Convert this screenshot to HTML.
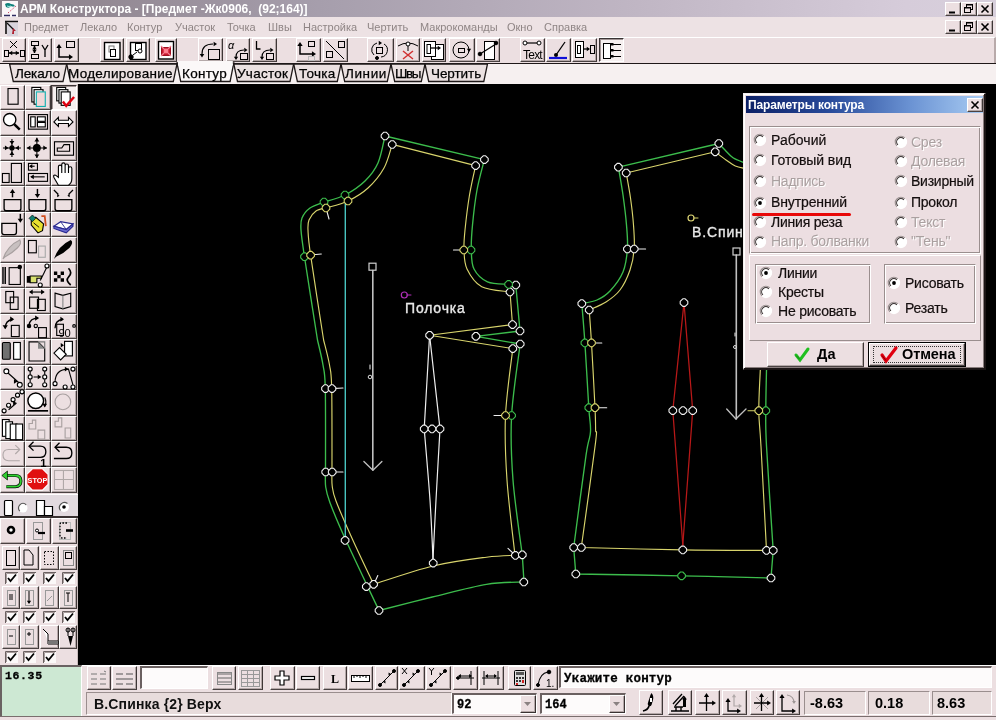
<!DOCTYPE html>
<html><head><meta charset="utf-8"><style>
*{margin:0;padding:0;box-sizing:border-box}
html,body{width:996px;height:720px;overflow:hidden;background:#ecdfe1;font-family:"Liberation Sans",sans-serif;font-size:11px;color:#000}
.a{position:absolute}
.t{white-space:nowrap;line-height:1;will-change:transform}
.b{background:#ecdfe1;border-style:solid;border-width:1px;border-color:#fff #3e3636 #4a4242 #fff;box-shadow:inset -1px -1px #b4a8a8}
.bp{background:#f6f0f0;border-style:solid;border-width:1px;border-color:#3a3434 #fff #fff #3a3434;box-shadow:inset 1px 1px #a09494}
.b svg,.bp svg{position:absolute;left:0;top:0}
svg{overflow:visible;will-change:transform}
</style></head><body>
<div class="a" style="left:0px;top:0px;width:996px;height:17px;background:linear-gradient(90deg,#8a7f88 0%,#a69eac 32%,#c0b6c4 64%,#d6ccda 91%,#d8d0dc 100%)"></div><svg class="a" style="left:2px;top:1px;" width="16" height="16" viewBox="0 0 16 16"><rect x="0" y="0" width="16" height="16" fill="#fbf6f8"/><path d="M3 3 q3-2 6 0 q3 0 4 2 q-2 1-4 0 q-2 3-5 1 z" fill="#10807a"/><path d="M5 5 q2 1 4 0" stroke="#a0f0e8" stroke-width="1" fill="none"/><path d="M6 12 l8-7" stroke="#c84060" stroke-width="1" stroke-dasharray="1.5 1.5" fill="none"/><path d="M2 14.5h6M10 14.5h4" stroke="#302a60" stroke-width="1.5"/></svg><div class="a t" style="left:20px;top:3px;font-weight:bold;font-size:12px;color:#fff">АРМ Конструктора - [Предмет -Жк0906,&nbsp; (92;164)]</div><div class="a b" style="left:945px;top:2px;width:16px;height:14px"></div><div class="a b" style="left:961px;top:2px;width:16px;height:14px"></div><div class="a b" style="left:977px;top:2px;width:16px;height:14px"></div><svg class="a" style="left:945px;top:2px;" width="16" height="14" viewBox="0 0 16 14"><path d="M4 10.5h6" stroke="#000" stroke-width="2"/></svg><svg class="a" style="left:961px;top:2px;" width="16" height="14" viewBox="0 0 16 14"><rect x="5.5" y="2.5" width="6" height="5" fill="none" stroke="#000"/><path d="M5 3h7" stroke="#000" stroke-width="1"/><rect x="3.5" y="5.5" width="6" height="5" fill="#ecdfe1" stroke="#000"/><path d="M3 6h7" stroke="#000"/></svg><svg class="a" style="left:977px;top:2px;" width="16" height="14" viewBox="0 0 16 14"><path d="M4.5 3.5l7 7M11.5 3.5l-7 7" stroke="#000" stroke-width="1.6"/></svg><div class="a" style="left:0px;top:17px;width:996px;height:20px;background:#ede2e4"></div><svg class="a" style="left:0px;top:19px;" width="16" height="16" viewBox="0 0 16 16"><path d="M7 4h11v13h-11z" fill="#d8d4dc"/><path d="M5 2.5h13M6 2v13" stroke="#111" stroke-width="1.6" fill="none"/><path d="M7 4l7 7" stroke="#111" stroke-width="1.3"/><path d="M13 9l3 3-2 0 0 3-2 0z" fill="#b02030"/></svg><div class="a t" style="left:24px;top:22px;font-size:11px;color:#8f8585">Предмет</div><div class="a t" style="left:80px;top:22px;font-size:11px;color:#8f8585">Лекало</div><div class="a t" style="left:126.5px;top:22px;font-size:11px;color:#8f8585">Контур</div><div class="a t" style="left:174.5px;top:22px;font-size:11px;color:#8f8585">Участок</div><div class="a t" style="left:227px;top:22px;font-size:11px;color:#8f8585">Точка</div><div class="a t" style="left:267.5px;top:22px;font-size:11px;color:#8f8585">Швы</div><div class="a t" style="left:303px;top:22px;font-size:11px;color:#8f8585">Настройка</div><div class="a t" style="left:367px;top:22px;font-size:11px;color:#8f8585">Чертить</div><div class="a t" style="left:420px;top:22px;font-size:11px;color:#8f8585">Макрокоманды</div><div class="a t" style="left:507px;top:22px;font-size:11px;color:#8f8585">Окно</div><div class="a t" style="left:544px;top:22px;font-size:11px;color:#8f8585">Справка</div><div class="a b" style="left:945px;top:20px;width:16px;height:14px"></div><div class="a b" style="left:961px;top:20px;width:16px;height:14px"></div><div class="a b" style="left:977px;top:20px;width:16px;height:14px"></div><svg class="a" style="left:945px;top:20px;" width="16" height="14" viewBox="0 0 16 14"><path d="M4 10.5h6" stroke="#000" stroke-width="2"/></svg><svg class="a" style="left:961px;top:20px;" width="16" height="14" viewBox="0 0 16 14"><rect x="5.5" y="2.5" width="6" height="5" fill="none" stroke="#000"/><path d="M5 3h7" stroke="#000" stroke-width="1"/><rect x="3.5" y="5.5" width="6" height="5" fill="#ecdfe1" stroke="#000"/><path d="M3 6h7" stroke="#000"/></svg><svg class="a" style="left:977px;top:20px;" width="16" height="14" viewBox="0 0 16 14"><path d="M4.5 3.5l7 7M11.5 3.5l-7 7" stroke="#000" stroke-width="1.6"/></svg><div class="a" style="left:0px;top:37px;width:996px;height:26px;background:#ecdfe1;border-top:1px solid #fff;border-right:2px solid #b8aaaa"></div><div class="a" style="left:0px;top:62.5px;width:996px;height:2px;background:#1e1818"></div><div class="a" style="left:0px;top:64px;width:996px;height:20px;background:#f3eded"></div><div class="a b" style="left:2px;top:38px;width:24px;height:24px"></div><svg class="a" style="left:2px;top:38px;" width="24" height="24" viewBox="0 0 24 24"><path d="M8 3l7 7M15 3l-7 7" stroke="#000" stroke-width="1" fill="none"/><rect x="2.5" y="12.5" width="4" height="6" fill="none" stroke="#000" stroke-width="1"/><rect x="18.5" y="12.5" width="4" height="6" fill="none" stroke="#000" stroke-width="1"/><path d="M7 15h10" stroke="#000" stroke-width="1.5" fill="none"/><polygon points="7,15 10.24,12.84 10.24,17.16" fill="#000"/><polygon points="17,15 13.76,12.84 13.76,17.16" fill="#000"/></svg><div class="a b" style="left:28px;top:38px;width:24px;height:24px"></div><svg class="a" style="left:28px;top:38px;" width="24" height="24" viewBox="0 0 24 24"><rect x="3.5" y="3.5" width="7" height="4" fill="none" stroke="#000" stroke-width="1"/><rect x="3.5" y="16.5" width="7" height="4" fill="none" stroke="#000" stroke-width="1"/><path d="M6.5 8v7" stroke="#000" stroke-width="1.5" fill="none"/><polygon points="6.5,8 4.34,11.24 8.66,11.24" fill="#000"/><polygon points="6.5,15 4.34,11.76 8.66,11.76" fill="#000"/><path d="M14 7l3 5l3-5M17 12v7" stroke="#000" stroke-width="1.3" fill="none"/></svg><div class="a b" style="left:54px;top:38px;width:25px;height:24px"></div><svg class="a" style="left:54px;top:38px;" width="25" height="24" viewBox="0 0 25 24"><rect x="12.5" y="3.5" width="8" height="6" fill="none" stroke="#000" stroke-width="1"/><path d="M5 8v11h12" stroke="#000" stroke-width="1.5" fill="none"/><polygon points="5,6 2.3,10.05 7.7,10.05" fill="#000"/><polygon points="19,19 14.95,16.3 14.95,21.7" fill="#000"/></svg><div class="a b" style="left:100px;top:38px;width:24px;height:24px"></div><svg class="a" style="left:100px;top:38px;" width="24" height="24" viewBox="0 0 24 24"><rect x="4.5" y="4.5" width="15.5" height="17" fill="#fff" stroke="#000" stroke-width="1.4"/><rect x="9.0" y="8.0" width="5" height="6" fill="none" stroke="#777" stroke-width="1"/><rect x="10.5" y="11.5" width="5" height="7" fill="#fff" stroke="#000" stroke-width="1"/></svg><div class="a b" style="left:126px;top:38px;width:24px;height:24px"></div><svg class="a" style="left:126px;top:38px;" width="24" height="24" viewBox="0 0 24 24"><rect x="4.5" y="4.5" width="15.5" height="17" fill="#fff" stroke="#000" stroke-width="1.4"/><rect x="9.5" y="5.5" width="6" height="7" fill="none" stroke="#000" stroke-width="1"/><circle cx="14" cy="13" r="2" fill="#fff" stroke="#000" stroke-width="1"/><circle cx="5" cy="19" r="2.2" fill="#000" stroke="#000" stroke-width="1"/><path d="M7 17l4-3" stroke="#000" stroke-width="1" fill="none"/></svg><div class="a b" style="left:155px;top:38px;width:22px;height:24px"></div><svg class="a" style="left:155px;top:38px;" width="22" height="24" viewBox="0 0 22 24"><rect x="3.5" y="3.5" width="15" height="17.5" fill="#fff" stroke="#000" stroke-width="1.4"/><rect x="6.5" y="9.5" width="9" height="8" fill="#c81830" stroke="#a01020" stroke-width="1"/><path d="M6 8l10 10M16 8l-10 10" stroke="#f08090" stroke-width="1.2" fill="none"/><circle cx="11" cy="13" r="2" fill="#ff8090" stroke="#ff8090" stroke-width="1"/></svg><div class="a b" style="left:198px;top:38px;width:25px;height:24px"></div><svg class="a" style="left:198px;top:38px;" width="25" height="24" viewBox="0 0 25 24"><path d="M4 16 q0-10 11-10" stroke="#000" stroke-width="1.2" fill="none"/><polygon points="19,6 15.597999999999999,3.7319999999999998 15.597999999999999,8.268" fill="#000"/><polygon points="4,19.5 1.7319999999999998,16.098 6.268000000000001,16.098" fill="#000"/><rect x="10.5" y="11.5" width="11" height="10" fill="none" stroke="#000" stroke-width="1"/></svg><div class="a b" style="left:226px;top:38px;width:24px;height:24px"></div><svg class="a" style="left:226px;top:38px;" width="24" height="24" viewBox="0 0 24 24"><text x="2" y="11" font-size="11" font-family="Liberation Sans" font-style="italic">α</text><path d="M10 19 q0-7 8-7" stroke="#000" stroke-width="1.2" fill="none"/><polygon points="21.5,12 18.259999999999998,9.84 18.259999999999998,14.16" fill="#000"/><polygon points="10,22 7.84,18.759999999999998 12.16,18.759999999999998" fill="#000"/><rect x="14.5" y="15.5" width="7" height="6" fill="none" stroke="#000" stroke-width="1"/></svg><div class="a b" style="left:252px;top:38px;width:25px;height:24px"></div><svg class="a" style="left:252px;top:38px;" width="25" height="24" viewBox="0 0 25 24"><path d="M4.5 3v8h4" stroke="#000" stroke-width="1.3" fill="none"/><path d="M10 19 q0-7 8-7" stroke="#000" stroke-width="1.2" fill="none"/><polygon points="21.5,12 18.259999999999998,9.84 18.259999999999998,14.16" fill="#000"/><polygon points="10,22 7.84,18.759999999999998 12.16,18.759999999999998" fill="#000"/><rect x="14.5" y="15.5" width="7" height="6" fill="none" stroke="#000" stroke-width="1"/></svg><div class="a b" style="left:296px;top:38px;width:25px;height:24px"></div><svg class="a" style="left:296px;top:38px;" width="25" height="24" viewBox="0 0 25 24"><rect x="12.5" y="3.5" width="6" height="5" fill="none" stroke="#000" stroke-width="1"/><path d="M4 7v9h14" stroke="#000" stroke-width="1.5" fill="none"/><polygon points="4,4 1.2999999999999998,8.05 6.7,8.05" fill="#000"/><polygon points="20,16 15.95,13.3 15.95,18.7" fill="#000"/><rect x="12.5" y="18.5" width="6" height="4" fill="none" stroke="#bbb" stroke-width="1"/></svg><div class="a b" style="left:323px;top:38px;width:25px;height:24px"></div><svg class="a" style="left:323px;top:38px;" width="25" height="24" viewBox="0 0 25 24"><rect x="15.5" y="3.5" width="6" height="6" fill="none" stroke="#000" stroke-width="1"/><rect x="3.5" y="13.5" width="6" height="6" fill="none" stroke="#000" stroke-width="1"/><path d="M3 3l18 18" stroke="#000" stroke-width="1" fill="none"/></svg><div class="a b" style="left:367px;top:38px;width:27px;height:24px"></div><svg class="a" style="left:367px;top:38px;" width="27" height="24" viewBox="0 0 27 24"><path d="M7 17 a7 7 0 0 1 3-12" stroke="#000" fill="none"/><path d="M17 6 a7 7 0 0 1-3 13" stroke="#000" fill="none"/><polygon points="15,5 11.76,2.84 11.76,7.16" fill="#000"/><circle cx="10" cy="20" r="1.5" fill="#000" stroke="#000" stroke-width="1"/><rect x="9.5" y="9.5" width="6" height="6" fill="none" stroke="#000" stroke-width="1"/></svg><div class="a b" style="left:396px;top:38px;width:24px;height:24px"></div><svg class="a" style="left:396px;top:38px;" width="24" height="24" viewBox="0 0 24 24"><path d="M2 8 q10-6 20 0" stroke="#000" stroke-width="1" fill="none"/><circle cx="12" cy="6" r="2" fill="#fff" stroke="#000" stroke-width="1"/><path d="M12 8v5" stroke="#000" stroke-width="1" fill="none"/><path d="M7 13l10 8M17 13l-10 8" stroke="#d03030" stroke-width="1.5" fill="none"/></svg><div class="a b" style="left:422px;top:38px;width:24px;height:24px"></div><svg class="a" style="left:422px;top:38px;" width="24" height="24" viewBox="0 0 24 24"><rect x="9.5" y="6.5" width="12" height="15" fill="#fff" stroke="#000" stroke-width="1"/><rect x="2.5" y="3.5" width="11" height="15" fill="#fff" stroke="#000" stroke-width="1"/><rect x="5.0" y="6.5" width="3.5" height="9" fill="#fff" stroke="#000" stroke-width="1"/><path d="M9 10h8" stroke="#000" stroke-width="1.3" fill="none"/><polygon points="19,10 15.76,7.84 15.76,12.16" fill="#000"/></svg><div class="a b" style="left:449px;top:38px;width:26px;height:24px"></div><svg class="a" style="left:449px;top:38px;" width="26" height="24" viewBox="0 0 26 24"><circle cx="12" cy="12" r="8" fill="none" stroke="#000" stroke-width="1"/><rect x="9.5" y="10.5" width="6" height="4" fill="none" stroke="#000" stroke-width="1"/><polygon points="20,14 17.84,10.76 22.16,10.76" fill="#000"/></svg><div class="a b" style="left:476px;top:38px;width:24px;height:24px"></div><svg class="a" style="left:476px;top:38px;" width="24" height="24" viewBox="0 0 24 24"><rect x="8.5" y="3.5" width="10" height="18" fill="#fff" stroke="#000" stroke-width="1"/><path d="M4 16l16-10" stroke="#000" stroke-width="1.2" fill="none"/><circle cx="4" cy="16" r="1.8" fill="#000" stroke="#000" stroke-width="1"/><circle cx="20" cy="5" r="1.8" fill="#000" stroke="#000" stroke-width="1"/></svg><div class="a b" style="left:520px;top:38px;width:25px;height:24px"></div><svg class="a" style="left:520px;top:38px;" width="25" height="24" viewBox="0 0 25 24"><path d="M5 5h14" stroke="#000" stroke-width="1.2" fill="none"/><circle cx="5" cy="5" r="2" fill="#fff" stroke="#000" stroke-width="1"/><circle cx="19" cy="5" r="2" fill="#fff" stroke="#000" stroke-width="1"/><text x="12.5" y="21" text-anchor="middle" font-size="12" font-family="Liberation Sans" letter-spacing="-0.8" fill="#000">Text</text></svg><div class="a b" style="left:546px;top:38px;width:25px;height:24px"></div><svg class="a" style="left:546px;top:38px;" width="25" height="24" viewBox="0 0 25 24"><path d="M10 17l9-13" stroke="#000" stroke-width="1.3" fill="none"/><circle cx="10" cy="17" r="2" fill="#000"/><path d="M3 20h18" stroke="#1010d8" stroke-width="2.2" fill="none"/></svg><div class="a b" style="left:572px;top:38px;width:25px;height:24px"></div><svg class="a" style="left:572px;top:38px;" width="25" height="24" viewBox="0 0 25 24"><rect x="3.5" y="3.5" width="8" height="16" fill="#fff" stroke="#000" stroke-width="1"/><rect x="5.5" y="7.5" width="3" height="8" fill="none" stroke="#000" stroke-width="1"/><path d="M12 11h5" stroke="#000" stroke-width="1.3" fill="none"/><polygon points="18,11 14.76,8.84 14.76,13.16" fill="#000"/><rect x="18.5" y="7.5" width="4" height="8" fill="none" stroke="#000" stroke-width="1"/></svg><div class="a bp" style="left:599px;top:38px;width:25px;height:24px"></div><svg class="a" style="left:599px;top:38px;" width="25" height="24" viewBox="0 0 25 24"><rect x="4.5" y="5.5" width="7" height="15" fill="#fff" stroke="#000" stroke-width="1"/><path d="M14 6.5h8M14 12.5h8M14 18.5h8" stroke="#000" stroke-width="1" fill="none"/><rect x="12" y="5" width="2.5" height="2.5"/><rect x="12" y="11" width="2.5" height="2.5"/><rect x="12" y="17" width="2.5" height="2.5"/></svg><div class="a" style="left:0px;top:64px;width:996px;height:20px;background:#f6f0f0"></div><svg class="a" style="left:0px;top:0px;" width="996" height="90" viewBox="0 0 996 90"><polygon points="9.6,64 13.3,81.5 63.0,81.5 66.7,64" fill="#ebe1e1" stroke="#1e1818" stroke-width="1.3"/><polygon points="66.7,64 70.4,81.5 173.3,81.5 177,64" fill="#ebe1e1" stroke="#1e1818" stroke-width="1.3"/><polygon points="233.8,64 237.5,81.5 290.0,81.5 293.7,64" fill="#ebe1e1" stroke="#1e1818" stroke-width="1.3"/><polygon points="293.7,64 297.4,81.5 337.3,81.5 341,64" fill="#ebe1e1" stroke="#1e1818" stroke-width="1.3"/><polygon points="341,64 344.7,81.5 387.3,81.5 391,64" fill="#ebe1e1" stroke="#1e1818" stroke-width="1.3"/><polygon points="391,64 394.7,81.5 421.3,81.5 425,64" fill="#ebe1e1" stroke="#1e1818" stroke-width="1.3"/><polygon points="425,64 428.7,81.5 483.8,81.5 487.5,64" fill="#ebe1e1" stroke="#1e1818" stroke-width="1.3"/><polygon points="177,63 180.7,81.5 230.10000000000002,81.5 233.8,63" fill="#fbf8f8" stroke="#1e1818" stroke-width="1.3"/><rect x="178" y="61" width="54.80000000000001" height="4.5" fill="#fbf8f8"/></svg><div class="a t" style="left:14.5px;top:67px;font-size:13.5px;letter-spacing:-0.123px;color:#000;-webkit-text-stroke:0.25px #000">Лекало</div><div class="a t" style="left:68.3px;top:67px;font-size:13.5px;letter-spacing:0.295px;color:#000;-webkit-text-stroke:0.25px #000">Моделирование</div><div class="a t" style="left:182px;top:67px;font-size:13.5px;letter-spacing:0.286px;color:#000;-webkit-text-stroke:0.25px #000">Контур</div><div class="a t" style="left:236.8px;top:67px;font-size:13.5px;letter-spacing:0.267px;color:#000;-webkit-text-stroke:0.25px #000">Участок</div><div class="a t" style="left:299px;top:67px;font-size:13.5px;letter-spacing:0.306px;color:#000;-webkit-text-stroke:0.25px #000">Точка</div><div class="a t" style="left:345px;top:67px;font-size:13.5px;letter-spacing:0.609px;color:#000;-webkit-text-stroke:0.25px #000">Линии</div><div class="a t" style="left:395px;top:67px;font-size:13.5px;letter-spacing:-1.417px;color:#000;-webkit-text-stroke:0.25px #000">Швы</div><div class="a t" style="left:430.5px;top:67px;font-size:13.5px;letter-spacing:-0.070px;color:#000;-webkit-text-stroke:0.25px #000">Чертить</div><div class="a" style="left:0px;top:84px;width:78px;height:582px;background:#ecdfe1"></div><div class="a" style="left:77px;top:84px;width:1px;height:582px;background:#c8bcbc"></div><div class="a b" style="left:0px;top:85px;width:25px;height:25px"></div><svg class="a" style="left:0px;top:85px;" width="25" height="25" viewBox="0 0 25 25"><g transform="translate(12.5,12.5) scale(1.12) translate(-12.5,-12.5)"><rect x="8.5" y="4.5" width="9" height="14" fill="none" stroke="#000" stroke-width="1"/></g></svg><div class="a b" style="left:25px;top:85px;width:26px;height:25px"></div><svg class="a" style="left:25px;top:85px;" width="26" height="25" viewBox="0 0 26 25"><g transform="translate(13.0,12.5) scale(1.12) translate(-13.0,-12.5)"><g stroke-width="1"><rect x="7.5" y="3.5" width="8" height="13" fill="#fff" stroke="#000" stroke-width="1"/><rect x="9.5" y="5.5" width="8" height="13" fill="#fff" stroke="#000" stroke-width="1"/><rect x="11.5" y="7.5" width="8" height="13" fill="#f0d8d8" stroke="#10b0b0" stroke-width="1"/></g></g></svg><div class="a bp" style="left:51px;top:85px;width:26px;height:25px"></div><svg class="a" style="left:51px;top:85px;" width="26" height="25" viewBox="0 0 26 25"><g transform="translate(13.0,12.5) scale(1.12) translate(-13.0,-12.5)"><rect x="6.5" y="3.5" width="8" height="12" fill="#fff" stroke="#000" stroke-width="1"/><rect x="8.5" y="5.5" width="8" height="12" fill="#fff" stroke="#000" stroke-width="1"/><rect x="10.5" y="7.5" width="8" height="12" fill="#fff" stroke="#000" stroke-width="1"/><path d="M12 16l3 4l7-8" stroke="#e00010" stroke-width="2.2" fill="none"/></g></svg><div class="a b" style="left:0px;top:110px;width:25px;height:26px"></div><svg class="a" style="left:0px;top:110px;" width="25" height="26" viewBox="0 0 25 26"><g transform="translate(12.5,13.0) scale(1.12) translate(-12.5,-13.0)"><circle cx="10" cy="10" r="5.5" fill="#fff" stroke="#000" stroke-width="1.2"/><path d="M14 14l5 5" stroke="#000" stroke-width="2.2" fill="none"/></g></svg><div class="a b" style="left:25px;top:110px;width:26px;height:26px"></div><svg class="a" style="left:25px;top:110px;" width="26" height="26" viewBox="0 0 26 26"><g transform="translate(13.0,13.0) scale(1.12) translate(-13.0,-13.0)"><rect x="4.5" y="5.5" width="17" height="13" fill="none" stroke="#000" stroke-width="1"/><rect x="6.5" y="7.5" width="4" height="9" fill="#fff" stroke="#000" stroke-width="1"/><rect x="12.5" y="7.5" width="7" height="4" fill="#fff" stroke="#000" stroke-width="1"/><rect x="12.5" y="12.5" width="7" height="4" fill="#fff" stroke="#000" stroke-width="1"/></g></svg><div class="a b" style="left:51px;top:110px;width:26px;height:26px"></div><svg class="a" style="left:51px;top:110px;" width="26" height="26" viewBox="0 0 26 26"><g transform="translate(13.0,13.0) scale(1.12) translate(-13.0,-13.0)"><polygon points="4,12 8,8 8,10.5 17,10.5 17,8 21,12 17,16 17,13.5 8,13.5 8,16" fill="#fff" stroke="#000" stroke-width="1"/></g></svg><div class="a b" style="left:0px;top:136px;width:25px;height:25px"></div><svg class="a" style="left:0px;top:136px;" width="25" height="25" viewBox="0 0 25 25"><g transform="translate(12.5,12.5) scale(1.12) translate(-12.5,-12.5)"><path d="M12 4v16M4 12h16" stroke="#000" stroke-width="1" fill="none"/><circle cx="12" cy="12" r="1.8" fill="#000" stroke="#000" stroke-width="1"/><polygon points="12,9 9.84,5.76 14.16,5.76" fill="#000"/><polygon points="12,15 9.84,18.240000000000002 14.16,18.240000000000002" fill="#000"/><polygon points="9,12 5.76,9.84 5.76,14.16" fill="#000"/><polygon points="15,12 18.240000000000002,9.84 18.240000000000002,14.16" fill="#000"/></g></svg><div class="a b" style="left:25px;top:136px;width:26px;height:25px"></div><svg class="a" style="left:25px;top:136px;" width="26" height="25" viewBox="0 0 26 25"><g transform="translate(13.0,12.5) scale(1.12) translate(-13.0,-12.5)"><path d="M12 3v18M3 12h18" stroke="#000" stroke-width="1" fill="none"/><circle cx="12" cy="12" r="3" fill="#000" stroke="#000" stroke-width="1"/><polygon points="12,3 9.84,6.24 14.16,6.24" fill="#000"/><polygon points="12,21 9.84,17.759999999999998 14.16,17.759999999999998" fill="#000"/><polygon points="3,12 6.24,9.84 6.24,14.16" fill="#000"/><polygon points="21,12 17.759999999999998,9.84 17.759999999999998,14.16" fill="#000"/></g></svg><div class="a b" style="left:51px;top:136px;width:26px;height:25px"></div><svg class="a" style="left:51px;top:136px;" width="26" height="25" viewBox="0 0 26 25"><g transform="translate(13.0,12.5) scale(1.12) translate(-13.0,-12.5)"><rect x="4.5" y="6.5" width="17" height="12" fill="none" stroke="#000" stroke-width="1"/><path d="M7 15v-3h4l2-3h5v6z" stroke="#000" stroke-width="1" fill="none"/></g></svg><div class="a b" style="left:0px;top:161px;width:25px;height:25px"></div><svg class="a" style="left:0px;top:161px;" width="25" height="25" viewBox="0 0 25 25"><g transform="translate(12.5,12.5) scale(1.12) translate(-12.5,-12.5)"><rect x="3.5" y="12.5" width="6" height="8" fill="none" stroke="#000" stroke-width="1"/><rect x="11.5" y="3.5" width="9" height="17" fill="none" stroke="#000" stroke-width="1"/></g></svg><div class="a b" style="left:25px;top:161px;width:26px;height:25px"></div><svg class="a" style="left:25px;top:161px;" width="26" height="25" viewBox="0 0 26 25"><g transform="translate(13.0,12.5) scale(1.12) translate(-13.0,-12.5)"><rect x="4.5" y="3.5" width="8" height="6" fill="none" stroke="#000" stroke-width="1"/><path d="M10 6h-4" stroke="#000" stroke-width="1" fill="none"/><polygon points="5,6 7.916,4.056 7.916,7.944" fill="#000"/><rect x="4.5" y="12.5" width="17" height="7" fill="none" stroke="#000" stroke-width="1"/><path d="M19 15.5h-12" stroke="#000" stroke-width="1" fill="none"/><polygon points="6,15.5 9.24,13.34 9.24,17.66" fill="#000"/></g></svg><div class="a b" style="left:51px;top:161px;width:26px;height:25px"></div><svg class="a" style="left:51px;top:161px;" width="26" height="25" viewBox="0 0 26 25"><g transform="translate(13.0,12.5) scale(1.12) translate(-13.0,-12.5)"><path d="M8 23 L4 16 Q3 13.5 5.5 14 L8 16 V6.5 Q8 5 9.5 5 Q11 5 11 6.5 V12 V4.5 Q11 3 12.5 3 Q14 3 14 4.5 V12 V5.5 Q14 4 15.5 4 Q17 4 17 5.5 V12 V8 Q17 6.5 18.5 6.5 Q20 6.5 20 8 V17 Q20 21 17 23 Z" fill="#fff" stroke="#000" stroke-width="1"/></g></svg><div class="a b" style="left:0px;top:186px;width:25px;height:26px"></div><svg class="a" style="left:0px;top:186px;" width="25" height="26" viewBox="0 0 25 26"><g transform="translate(12.5,13.0) scale(1.12) translate(-12.5,-13.0)"><path d="M5 13.5h15v8q0 2-2 2h-11q-2 0-2-2z" stroke="#000" stroke-width="1.2" fill="none"/><path d="M12.5 11.5v-5" stroke="#000" stroke-width="1.3" fill="none"/><polygon points="12.5,4 10.123999999999999,7.564 14.876000000000001,7.564" fill="#000"/></g></svg><div class="a b" style="left:25px;top:186px;width:26px;height:26px"></div><svg class="a" style="left:25px;top:186px;" width="26" height="26" viewBox="0 0 26 26"><g transform="translate(13.0,13.0) scale(1.12) translate(-13.0,-13.0)"><path d="M5 13.5h15v8q0 2-2 2h-11q-2 0-2-2z" stroke="#000" stroke-width="1.2" fill="none"/><path d="M12.5 4v5" stroke="#000" stroke-width="1.3" fill="none"/><polygon points="12.5,12 10.123999999999999,8.436 14.876000000000001,8.436" fill="#000"/></g></svg><div class="a b" style="left:51px;top:186px;width:26px;height:26px"></div><svg class="a" style="left:51px;top:186px;" width="26" height="26" viewBox="0 0 26 26"><g transform="translate(13.0,13.0) scale(1.12) translate(-13.0,-13.0)"><path d="M5 13.5h15v8q0 2-2 2h-11q-2 0-2-2z" stroke="#000" stroke-width="1.2" fill="none"/><path d="M4 5l4 4M21 5l-4 4" stroke="#000" stroke-width="1.1" fill="none"/><polygon points="9,10 6.894,8.596 6.894,11.404" fill="#000"/><polygon points="16,10 18.106,8.596 18.106,11.404" fill="#000"/></g></svg><div class="a b" style="left:0px;top:212px;width:25px;height:25px"></div><svg class="a" style="left:0px;top:212px;" width="25" height="25" viewBox="0 0 25 25"><g transform="translate(12.5,12.5) scale(1.12) translate(-12.5,-12.5)"><path d="M3 11.5h13v8q0 2-2 2h-9q-2 0-2-2z" stroke="#000" stroke-width="1.2" fill="none"/><path d="M19.5 3v6" stroke="#000" stroke-width="1.3" fill="none"/><polygon points="19.5,11 17.124,7.436 21.876,7.436" fill="#000"/></g></svg><div class="a b" style="left:25px;top:212px;width:26px;height:25px"></div><svg class="a" style="left:25px;top:212px;" width="26" height="25" viewBox="0 0 26 25"><g transform="translate(13.0,12.5) scale(1.12) translate(-13.0,-12.5)"><path d="M7 9l4-3 7 6-1 6-4 2-6-7z" fill="#e8e030" stroke="#000" stroke-width="1"/><path d="M5 7l3-3 3 3-3 3z" fill="#108070" stroke="#000" stroke-width="0.6"/><path d="M16 5l3 0 1 9" stroke="#d05020" stroke-width="1.6" fill="none"/><path d="M9 11l5 4" stroke="#000" stroke-width="0.8"/></g></svg><div class="a b" style="left:51px;top:212px;width:26px;height:25px"></div><svg class="a" style="left:51px;top:212px;" width="26" height="25" viewBox="0 0 26 25"><g transform="translate(13.0,12.5) scale(1.12) translate(-13.0,-12.5)"><path d="M4 14l6-4 11 2-6 5z" fill="#fff" stroke="#2a2a90" stroke-width="1"/><path d="M4 14v2l11 4 6-6v-2l-6 5z" fill="#6a6ad0" stroke="#2a2a90" stroke-width="1"/><path d="M10 10l5 7" stroke="#2a2a90" stroke-width="0.8"/></g></svg><div class="a b" style="left:0px;top:237px;width:25px;height:26px"></div><svg class="a" style="left:0px;top:237px;" width="25" height="26" viewBox="0 0 25 26"><g transform="translate(12.5,13.0) scale(1.12) translate(-12.5,-13.0)"><path d="M4 21 q4-12 15-17 q2 3-2 7 q-5 5-11 8z" fill="#c8c0c0" stroke="#a8a0a0"/></g></svg><div class="a b" style="left:25px;top:237px;width:26px;height:26px"></div><svg class="a" style="left:25px;top:237px;" width="26" height="26" viewBox="0 0 26 26"><g transform="translate(13.0,13.0) scale(1.12) translate(-13.0,-13.0)"><rect x="4.5" y="4.5" width="7" height="11" fill="none" stroke="#000" stroke-width="1"/><rect x="13.5" y="9.5" width="6" height="10" fill="none" stroke="#aaa" stroke-width="1"/></g></svg><div class="a b" style="left:51px;top:237px;width:26px;height:26px"></div><svg class="a" style="left:51px;top:237px;" width="26" height="26" viewBox="0 0 26 26"><g transform="translate(13.0,13.0) scale(1.12) translate(-13.0,-13.0)"><path d="M4 21 q4-12 15-17 q3 2-1 7 q-5 5-12 8z" fill="#000"/></g></svg><div class="a b" style="left:0px;top:263px;width:25px;height:25px"></div><svg class="a" style="left:0px;top:263px;" width="25" height="25" viewBox="0 0 25 25"><g transform="translate(12.5,12.5) scale(1.12) translate(-12.5,-12.5)"><path d="M4 5v15M6 5v15" stroke="#000" stroke-width="1.3" fill="none"/><rect x="9.5" y="5.5" width="10" height="15" fill="none" stroke="#000" stroke-width="1"/><circle cx="19" cy="5" r="1.5" fill="#000" stroke="#000" stroke-width="1"/></g></svg><div class="a b" style="left:25px;top:263px;width:26px;height:25px"></div><svg class="a" style="left:25px;top:263px;" width="26" height="25" viewBox="0 0 26 25"><g transform="translate(13.0,12.5) scale(1.12) translate(-13.0,-12.5)"><path d="M3 13h3v6h-3z" fill="#000"/><path d="M6 13h10v2h-4v4h-6z" fill="#d8e070" stroke="#000" stroke-width="1"/><path d="M15 17l6-12" stroke="#000" stroke-width="1" fill="none"/><circle cx="21" cy="4" r="1.8" fill="#fff" stroke="#000" stroke-width="1"/><circle cx="15" cy="21" r="1.8" fill="#fff" stroke="#000" stroke-width="1"/></g></svg><div class="a b" style="left:51px;top:263px;width:26px;height:25px"></div><svg class="a" style="left:51px;top:263px;" width="26" height="25" viewBox="0 0 26 25"><g transform="translate(13.0,12.5) scale(1.12) translate(-13.0,-12.5)"><path d="M4 9h3v3h-3zM7 12h3v3h-3zM4 15h3v3h-3zM10 9h3v3h-3zM10 15h3v3h-3z" fill="#000"/><path d="M17 6q4 4 0 8q-3 3 2 7" stroke="#000" stroke-width="1.5" fill="none"/></g></svg><div class="a b" style="left:0px;top:288px;width:25px;height:26px"></div><svg class="a" style="left:0px;top:288px;" width="25" height="26" viewBox="0 0 25 26"><g transform="translate(12.5,13.0) scale(1.12) translate(-12.5,-13.0)"><rect x="6.5" y="4.5" width="7" height="10" fill="none" stroke="#000" stroke-width="1"/><rect x="10.5" y="9.5" width="7" height="11" fill="none" stroke="#000" stroke-width="1"/></g></svg><div class="a b" style="left:25px;top:288px;width:26px;height:26px"></div><svg class="a" style="left:25px;top:288px;" width="26" height="26" viewBox="0 0 26 26"><g transform="translate(13.0,13.0) scale(1.12) translate(-13.0,-13.0)"><path d="M6 5h12" stroke="#000" stroke-width="1" fill="none"/><polygon points="5,5 8.24,2.84 8.24,7.16" fill="#000"/><polygon points="19,5 15.76,2.84 15.76,7.16" fill="#000"/><rect x="5.5" y="9.5" width="8" height="10" fill="none" stroke="#000" stroke-width="1"/><rect x="12.5" y="11.5" width="7" height="10" fill="none" stroke="#000" stroke-width="1"/></g></svg><div class="a b" style="left:51px;top:288px;width:26px;height:26px"></div><svg class="a" style="left:51px;top:288px;" width="26" height="26" viewBox="0 0 26 26"><g transform="translate(13.0,13.0) scale(1.12) translate(-13.0,-13.0)"><path d="M5 6l7 2 7-2v12l-7 2-7-2z" stroke="#000" stroke-width="1" fill="none"/><path d="M12 8v12" stroke="#888" stroke-width="1" fill="none"/></g></svg><div class="a b" style="left:0px;top:314px;width:25px;height:25px"></div><svg class="a" style="left:0px;top:314px;" width="25" height="25" viewBox="0 0 25 25"><g transform="translate(12.5,12.5) scale(1.12) translate(-12.5,-12.5)"><path d="M6 14 q0-7 7-8" stroke="#000" stroke-width="1.2" fill="none"/><polygon points="14,6 10.436,3.623999999999999 10.436,8.376000000000001" fill="#000"/><polygon points="6,15 3.623999999999999,11.436 8.376000000000001,11.436" fill="#000"/><rect x="11.5" y="11.5" width="7" height="10" fill="none" stroke="#000" stroke-width="1"/></g></svg><div class="a b" style="left:25px;top:314px;width:26px;height:25px"></div><svg class="a" style="left:25px;top:314px;" width="26" height="25" viewBox="0 0 26 25"><g transform="translate(13.0,12.5) scale(1.12) translate(-13.0,-12.5)"><path d="M5 11 q1-6 8-6" stroke="#000" stroke-width="1.2" fill="none"/><polygon points="14,5 10.436,2.623999999999999 10.436,7.376000000000001" fill="#000"/><circle cx="5" cy="12" r="1.5" fill="#000" stroke="#000" stroke-width="1"/><circle cx="11" cy="12" r="1.5" fill="none" stroke="#000" stroke-width="1"/><rect x="13.5" y="13.5" width="7" height="9" fill="none" stroke="#000" stroke-width="1"/></g></svg><div class="a b" style="left:51px;top:314px;width:26px;height:25px"></div><svg class="a" style="left:51px;top:314px;" width="26" height="25" viewBox="0 0 26 25"><g transform="translate(13.0,12.5) scale(1.12) translate(-13.0,-12.5)"><path d="M5 14 q0-7 7-8" stroke="#000" stroke-width="1.2" fill="none"/><polygon points="13,6 9.76,3.84 9.76,8.16" fill="#000"/><rect x="6.5" y="10.5" width="6" height="10" fill="none" stroke="#000" stroke-width="1"/><text x="8" y="22" font-size="10" font-family="Liberation Sans">90</text><circle cx="22" cy="12" r="1.2" fill="none" stroke="#000" stroke-width="1"/></g></svg><div class="a b" style="left:0px;top:339px;width:25px;height:26px"></div><svg class="a" style="left:0px;top:339px;" width="25" height="26" viewBox="0 0 25 26"><g transform="translate(12.5,13.0) scale(1.12) translate(-12.5,-13.0)"><rect x="3.5" y="4.5" width="7" height="15" rx="1" fill="#707070" stroke="#000"/><rect x="13.5" y="4.5" width="6" height="15" fill="#fff" stroke="#000" stroke-width="1"/></g></svg><div class="a b" style="left:25px;top:339px;width:26px;height:26px"></div><svg class="a" style="left:25px;top:339px;" width="26" height="26" viewBox="0 0 26 26"><g transform="translate(13.0,13.0) scale(1.12) translate(-13.0,-13.0)"><path d="M5 4h8l6 6v11h-14z" stroke="#000" stroke-width="1" fill="none"/><path d="M13 4v6h6z" fill="#888"/><path d="M13 4h6v6" stroke="#777" stroke-width="1" fill="none"/></g></svg><div class="a b" style="left:51px;top:339px;width:26px;height:26px"></div><svg class="a" style="left:51px;top:339px;" width="26" height="26" viewBox="0 0 26 26"><g transform="translate(13.0,13.0) scale(1.12) translate(-13.0,-13.0)"><rect x="13.5" y="3.5" width="7" height="13" fill="#fff" stroke="#000"/><path d="M4 14l5-5 6 6-5 5z" fill="#fff" stroke="#000"/><polygon points="13,7 10.084,5.056 10.084,8.944" fill="#000"/></g></svg><div class="a b" style="left:0px;top:365px;width:25px;height:25px"></div><svg class="a" style="left:0px;top:365px;" width="25" height="25" viewBox="0 0 25 25"><g transform="translate(12.5,12.5) scale(1.12) translate(-12.5,-12.5)"><path d="M8 8l10 9" stroke="#000" stroke-width="1" fill="none"/><circle cx="7" cy="7" r="2.2" fill="#fff" stroke="#000" stroke-width="1"/><circle cx="19" cy="19" r="2.2" fill="#fff" stroke="#000" stroke-width="1"/><polygon points="17,16 13.76,13.84 13.76,18.16" fill="#000"/></g></svg><div class="a b" style="left:25px;top:365px;width:26px;height:25px"></div><svg class="a" style="left:25px;top:365px;" width="26" height="25" viewBox="0 0 26 25"><g transform="translate(13.0,12.5) scale(1.12) translate(-13.0,-12.5)"><circle cx="6" cy="5" r="1.8" fill="#fff" stroke="#000" stroke-width="1"/><circle cx="6" cy="12" r="1.8" fill="#fff" stroke="#000" stroke-width="1"/><circle cx="6" cy="19" r="1.8" fill="#fff" stroke="#000" stroke-width="1"/><circle cx="19" cy="5" r="1.8" fill="#fff" stroke="#000" stroke-width="1"/><circle cx="19" cy="12" r="1.8" fill="#fff" stroke="#000" stroke-width="1"/><circle cx="19" cy="19" r="1.8" fill="#fff" stroke="#000" stroke-width="1"/><path d="M6 7v3M6 14v3M19 7v3M19 14v3M9 12h6" stroke="#000" stroke-width="1" fill="none"/><polygon points="16,12 12.76,9.84 12.76,14.16" fill="#000"/></g></svg><div class="a b" style="left:51px;top:365px;width:26px;height:25px"></div><svg class="a" style="left:51px;top:365px;" width="26" height="25" viewBox="0 0 26 25"><g transform="translate(13.0,12.5) scale(1.12) translate(-13.0,-12.5)"><path d="M5 17 q0-12 12-12 l4 14" stroke="#000" stroke-width="1" fill="none"/><polygon points="17,5 13.76,2.84 13.76,7.16" fill="#000"/><circle cx="5" cy="18" r="1.8" fill="#fff" stroke="#000" stroke-width="1"/><circle cx="21" cy="5" r="1.8" fill="#fff" stroke="#000" stroke-width="1"/><circle cx="21" cy="21" r="1.8" fill="#fff" stroke="#000" stroke-width="1"/><circle cx="14" cy="21" r="1.8" fill="#fff" stroke="#000" stroke-width="1"/></g></svg><div class="a b" style="left:0px;top:390px;width:25px;height:26px"></div><svg class="a" style="left:0px;top:390px;" width="25" height="26" viewBox="0 0 25 26"><g transform="translate(12.5,13.0) scale(1.12) translate(-12.5,-13.0)"><circle cx="5" cy="20" r="1.8" fill="#fff" stroke="#000" stroke-width="1"/><circle cx="9" cy="15" r="1.8" fill="#fff" stroke="#000" stroke-width="1"/><circle cx="13" cy="10" r="1.8" fill="#fff" stroke="#000" stroke-width="1"/><circle cx="17" cy="6" r="1.8" fill="#fff" stroke="#000" stroke-width="1"/><circle cx="21" cy="3" r="1.8" fill="#fff" stroke="#000" stroke-width="1"/><path d="M9 19l7-6" stroke="#000" stroke-width="1" fill="none"/><polygon points="16,13 13.084,11.056 13.084,14.944" fill="#000"/></g></svg><div class="a b" style="left:25px;top:390px;width:26px;height:26px"></div><svg class="a" style="left:25px;top:390px;" width="26" height="26" viewBox="0 0 26 26"><g transform="translate(13.0,13.0) scale(1.12) translate(-13.0,-13.0)"><circle cx="11" cy="11" r="7" fill="#fff" stroke="#000" stroke-width="1.3"/><path d="M4 20h18" stroke="#000" stroke-width="1.5" fill="none"/><path d="M19 8q2 4 0 8" stroke="#000" stroke-width="1" fill="none"/><polygon points="19,17 16.84,13.76 21.16,13.76" fill="#000"/></g></svg><div class="a b" style="left:51px;top:390px;width:26px;height:26px"></div><svg class="a" style="left:51px;top:390px;" width="26" height="26" viewBox="0 0 26 26"><g transform="translate(13.0,13.0) scale(1.12) translate(-13.0,-13.0)"><circle cx="12" cy="12" r="7" fill="none" stroke="#a8a0a0" stroke-width="1"/></g></svg><div class="a b" style="left:0px;top:416px;width:25px;height:25px"></div><svg class="a" style="left:0px;top:416px;" width="25" height="25" viewBox="0 0 25 25"><g transform="translate(12.5,12.5) scale(1.12) translate(-12.5,-12.5)"><rect x="3.5" y="4.5" width="6" height="15" fill="#fff" stroke="#000" stroke-width="1"/><rect x="6.5" y="6.5" width="6" height="15" fill="#fff" stroke="#000" stroke-width="1"/><rect x="10.5" y="8.5" width="6" height="14" fill="#fff" stroke="#000" stroke-width="1"/><rect x="15.5" y="8.5" width="6" height="14" fill="#fff" stroke="#000" stroke-width="1"/></g></svg><div class="a b" style="left:25px;top:416px;width:26px;height:25px"></div><svg class="a" style="left:25px;top:416px;" width="26" height="25" viewBox="0 0 26 25"><g transform="translate(13.0,12.5) scale(1.12) translate(-13.0,-12.5)"><path d="M5 8h3v-3h3v8h-6zM13 14h6v8h-6z" stroke="#a8a0a0" stroke-width="1" fill="none"/></g></svg><div class="a b" style="left:51px;top:416px;width:26px;height:25px"></div><svg class="a" style="left:51px;top:416px;" width="26" height="25" viewBox="0 0 26 25"><g transform="translate(13.0,12.5) scale(1.12) translate(-13.0,-12.5)"><path d="M5 6h3v-3h3v8h-6zM14 12h5v9h-5z" stroke="#a8a0a0" stroke-width="1" fill="none"/></g></svg><div class="a b" style="left:0px;top:441px;width:25px;height:26px"></div><svg class="a" style="left:0px;top:441px;" width="25" height="26" viewBox="0 0 25 26"><g transform="translate(12.5,13.0) scale(1.12) translate(-12.5,-13.0)"><path d="M19 9h-10q-5 0-5 5t5 5h10" stroke="#b0a8a8" stroke-width="1" fill="none"/><path d="M15 5l4 4-4 4" stroke="#b0a8a8" stroke-width="1" fill="none"/></g></svg><div class="a b" style="left:25px;top:441px;width:26px;height:26px"></div><svg class="a" style="left:25px;top:441px;" width="26" height="26" viewBox="0 0 26 26"><g transform="translate(13.0,13.0) scale(1.12) translate(-13.0,-13.0)"><path d="M5 6h10q5 0 5 5t-5 5h-11" stroke="#000" stroke-width="1.2" fill="none"/><path d="M9 2l-4 4 4 4" stroke="#000" stroke-width="1.2" fill="none"/><text x="15" y="25" font-size="10" font-weight="bold" font-family="Liberation Sans">1</text></g></svg><div class="a b" style="left:51px;top:441px;width:26px;height:26px"></div><svg class="a" style="left:51px;top:441px;" width="26" height="26" viewBox="0 0 26 26"><g transform="translate(13.0,13.0) scale(1.12) translate(-13.0,-13.0)"><path d="M5 7h10q5 0 5 5t-5 5h-11" stroke="#000" stroke-width="1.2" fill="none"/><path d="M9 3l-4 4 4 4" stroke="#000" stroke-width="1.2" fill="none"/></g></svg><div class="a b" style="left:0px;top:467px;width:25px;height:26px"></div><svg class="a" style="left:0px;top:467px;" width="25" height="26" viewBox="0 0 25 26"><g transform="translate(12.5,13.0) scale(1.12) translate(-12.5,-13.0)"><path d="M6 9h9q5 0 5 5t-5 5h-8" stroke="#000" stroke-width="2.8" fill="none"/><path d="M6 9h9q5 0 5 5t-5 5h-8" stroke="#30d030" stroke-width="1.6" fill="none"/><path d="M3 9l5-4v8z" fill="#30d030" stroke="#000" stroke-width="0.6"/></g></svg><div class="a b" style="left:25px;top:467px;width:26px;height:26px"></div><svg class="a" style="left:25px;top:467px;" width="26" height="26" viewBox="0 0 26 26"><g transform="translate(13.0,13.0) scale(1.12) translate(-13.0,-13.0)"><polygon points="8,3 17,3 22,8 22,17 17,22 8,22 3,17 3,8" fill="#e01010" stroke="#fff" stroke-width="1"/><text x="12.5" y="15.5" text-anchor="middle" font-size="6.5" font-weight="bold" fill="#fff" font-family="Liberation Sans">STOP</text></g></svg><div class="a b" style="left:51px;top:467px;width:26px;height:26px"></div><svg class="a" style="left:51px;top:467px;" width="26" height="26" viewBox="0 0 26 26"><g transform="translate(13.0,13.0) scale(1.12) translate(-13.0,-13.0)"><rect x="4.5" y="4.5" width="17" height="17" fill="none" stroke="#b0a8a8" stroke-width="1"/><path d="M12.5 4v17M4 12.5h17" stroke="#b0a8a8" stroke-width="1" fill="none"/></g></svg><div class="a" style="left:0px;top:494px;width:78px;height:24px;background:#e2dadf;border-top:1px solid #fff;border-bottom:2px solid #3a3232"></div><svg class="a" style="left:0px;top:490px;" width="78" height="24" viewBox="0 0 78 24"><rect x="4.5" y="10.5" width="8" height="15" rx="1" fill="#fff" stroke="#000" stroke-width="1.2"/><circle cx="23" cy="18" r="4.5" fill="#fff"/><path d="M19.8 21.2 A4.5 4.5 0 0 1 26.2 14.8" stroke="#555" stroke-width="1.2" fill="none"/><path d="M36.5 10.5h8v15h-8z" fill="#fff" stroke="#000" stroke-width="1.2"/><path d="M44.5 16.5h8v9h-8z" fill="#fff" stroke="#000" stroke-width="1.2"/><circle cx="64" cy="17" r="5" fill="#fff"/><path d="M60.5 20.5 A5 5 0 0 1 67.5 13.5" stroke="#555" stroke-width="1.2" fill="none"/><circle cx="64" cy="17" r="1.8" fill="#000"/></svg><div class="a b" style="left:0px;top:518px;width:25px;height:26px"></div><svg class="a" style="left:0px;top:518px;" width="25" height="26" viewBox="0 0 25 26"><circle cx="11" cy="12" r="3" fill="#fff" stroke="#000" stroke-width="2.6"/></svg><div class="a b" style="left:26px;top:518px;width:25px;height:26px"></div><svg class="a" style="left:26px;top:518px;" width="25" height="26" viewBox="0 0 25 26"><rect x="7.5" y="4.5" width="9" height="17" fill="none" stroke="#999" stroke-width="1"/><circle cx="11" cy="12.5" r="1.5" fill="#fff" stroke="#000" stroke-width="1"/><path d="M12 15h7" stroke="#000" stroke-width="2.2" fill="none"/></svg><div class="a b" style="left:52px;top:518px;width:25px;height:26px"></div><svg class="a" style="left:52px;top:518px;" width="25" height="26" viewBox="0 0 25 26"><rect x="7.5" y="4.5" width="11" height="17" fill="none" stroke="#bbb" stroke-width="1"/><path d="M15 5h-6q-1 0-1 2v11q0 2 2 2h5" stroke="#000" stroke-dasharray="1.6 1.4" stroke-width="1.3" fill="none"/><path d="M14 12.5h7" stroke="#000" stroke-width="2.6" fill="none"/></svg><div class="a b" style="left:2px;top:546px;width:18px;height:24px"></div><svg class="a" style="left:2px;top:546px;" width="18" height="24" viewBox="0 0 18 24"><rect x="4.5" y="4.5" width="9" height="15" fill="none" stroke="#000" stroke-width="1"/></svg><div class="a b" style="left:20px;top:546px;width:19px;height:24px"></div><svg class="a" style="left:20px;top:546px;" width="19" height="24" viewBox="0 0 19 24"><path d="M4 4h5l4 5v10h-9z" stroke="#000" stroke-width="1" fill="none"/></svg><div class="a b" style="left:40px;top:546px;width:19px;height:24px"></div><svg class="a" style="left:40px;top:546px;" width="19" height="24" viewBox="0 0 19 24"><rect x="4.5" y="5.5" width="9" height="13" fill="none" stroke="#000" stroke-dasharray="1.5 1.5"/></svg><div class="a b" style="left:59px;top:546px;width:18px;height:24px"></div><svg class="a" style="left:59px;top:546px;" width="18" height="24" viewBox="0 0 18 24"><rect x="4.5" y="4.5" width="10" height="15" fill="none" stroke="#888" stroke-width="1"/><rect x="6.5" y="6.5" width="6" height="6" fill="none" stroke="#000" stroke-width="1"/></svg><svg class="a" style="left:5px;top:572px;" width="14" height="13" viewBox="0 0 14 13"><rect x="0" y="0" width="13" height="12" fill="#fbf8f8"/><path d="M0.5 12V0.5H13" stroke="#6a6060" stroke-width="1" fill="none"/><path d="M1.5 11V1.5H12" stroke="#a89c9c" stroke-width="1" fill="none"/><path d="M3 6l2.5 3l5.5-6.5" stroke="#000" stroke-width="1.8" fill="none"/></svg><svg class="a" style="left:23px;top:572px;" width="14" height="13" viewBox="0 0 14 13"><rect x="0" y="0" width="13" height="12" fill="#fbf8f8"/><path d="M0.5 12V0.5H13" stroke="#6a6060" stroke-width="1" fill="none"/><path d="M1.5 11V1.5H12" stroke="#a89c9c" stroke-width="1" fill="none"/><path d="M3 6l2.5 3l5.5-6.5" stroke="#000" stroke-width="1.8" fill="none"/></svg><svg class="a" style="left:43px;top:572px;" width="14" height="13" viewBox="0 0 14 13"><rect x="0" y="0" width="13" height="12" fill="#fbf8f8"/><path d="M0.5 12V0.5H13" stroke="#6a6060" stroke-width="1" fill="none"/><path d="M1.5 11V1.5H12" stroke="#a89c9c" stroke-width="1" fill="none"/><path d="M3 6l2.5 3l5.5-6.5" stroke="#000" stroke-width="1.8" fill="none"/></svg><svg class="a" style="left:62px;top:572px;" width="14" height="13" viewBox="0 0 14 13"><rect x="0" y="0" width="13" height="12" fill="#fbf8f8"/><path d="M0.5 12V0.5H13" stroke="#6a6060" stroke-width="1" fill="none"/><path d="M1.5 11V1.5H12" stroke="#a89c9c" stroke-width="1" fill="none"/><path d="M3 6l2.5 3l5.5-6.5" stroke="#000" stroke-width="1.8" fill="none"/></svg><div class="a b" style="left:2px;top:586px;width:18px;height:23px"></div><svg class="a" style="left:2px;top:586px;" width="18" height="23" viewBox="0 0 18 23"><rect x="5.5" y="4.5" width="8" height="15" fill="none" stroke="#999" stroke-width="1"/><path d="M7 9h4M7 11h4M7 13h4" stroke="#000" stroke-width="1" fill="none"/></svg><div class="a b" style="left:20px;top:586px;width:19px;height:23px"></div><svg class="a" style="left:20px;top:586px;" width="19" height="23" viewBox="0 0 19 23"><rect x="5.5" y="4.5" width="8" height="15" fill="none" stroke="#999" stroke-width="1"/><path d="M9 5v12" stroke="#000" stroke-width="1" fill="none"/><polygon points="9,18 6.84,14.76 11.16,14.76" fill="#000"/></svg><div class="a b" style="left:40px;top:586px;width:19px;height:23px"></div><svg class="a" style="left:40px;top:586px;" width="19" height="23" viewBox="0 0 19 23"><rect x="5.5" y="4.5" width="8" height="15" fill="none" stroke="#999" stroke-width="1"/><path d="M7 15l5-5" stroke="#999" stroke-width="1" fill="none"/></svg><div class="a b" style="left:59px;top:586px;width:18px;height:23px"></div><svg class="a" style="left:59px;top:586px;" width="18" height="23" viewBox="0 0 18 23"><rect x="5.5" y="4.5" width="8" height="15" fill="none" stroke="#999" stroke-width="1"/><path d="M7 7h4M9 7v9" stroke="#000" stroke-width="1" fill="none"/></svg><svg class="a" style="left:5px;top:611px;" width="14" height="13" viewBox="0 0 14 13"><rect x="0" y="0" width="13" height="12" fill="#fbf8f8"/><path d="M0.5 12V0.5H13" stroke="#6a6060" stroke-width="1" fill="none"/><path d="M1.5 11V1.5H12" stroke="#a89c9c" stroke-width="1" fill="none"/><path d="M3 6l2.5 3l5.5-6.5" stroke="#000" stroke-width="1.8" fill="none"/></svg><svg class="a" style="left:23px;top:611px;" width="14" height="13" viewBox="0 0 14 13"><rect x="0" y="0" width="13" height="12" fill="#fbf8f8"/><path d="M0.5 12V0.5H13" stroke="#6a6060" stroke-width="1" fill="none"/><path d="M1.5 11V1.5H12" stroke="#a89c9c" stroke-width="1" fill="none"/><path d="M3 6l2.5 3l5.5-6.5" stroke="#000" stroke-width="1.8" fill="none"/></svg><svg class="a" style="left:43px;top:611px;" width="14" height="13" viewBox="0 0 14 13"><rect x="0" y="0" width="13" height="12" fill="#fbf8f8"/><path d="M0.5 12V0.5H13" stroke="#6a6060" stroke-width="1" fill="none"/><path d="M1.5 11V1.5H12" stroke="#a89c9c" stroke-width="1" fill="none"/><path d="M3 6l2.5 3l5.5-6.5" stroke="#000" stroke-width="1.8" fill="none"/></svg><svg class="a" style="left:62px;top:611px;" width="14" height="13" viewBox="0 0 14 13"><rect x="0" y="0" width="13" height="12" fill="#fbf8f8"/><path d="M0.5 12V0.5H13" stroke="#6a6060" stroke-width="1" fill="none"/><path d="M1.5 11V1.5H12" stroke="#a89c9c" stroke-width="1" fill="none"/><path d="M3 6l2.5 3l5.5-6.5" stroke="#000" stroke-width="1.8" fill="none"/></svg><div class="a b" style="left:2px;top:625px;width:18px;height:24px"></div><svg class="a" style="left:2px;top:625px;" width="18" height="24" viewBox="0 0 18 24"><rect x="5.5" y="4.5" width="8" height="15" fill="none" stroke="#999" stroke-width="1"/><path d="M7 11h4" stroke="#000" stroke-width="1" fill="none"/></svg><div class="a b" style="left:20px;top:625px;width:19px;height:24px"></div><svg class="a" style="left:20px;top:625px;" width="19" height="24" viewBox="0 0 19 24"><rect x="5.5" y="4.5" width="8" height="15" fill="none" stroke="#999" stroke-width="1"/><path d="M7 9h4M9 7v4" stroke="#000" stroke-width="1" fill="none"/></svg><div class="a b" style="left:40px;top:625px;width:19px;height:24px"></div><svg class="a" style="left:40px;top:625px;" width="19" height="24" viewBox="0 0 19 24"><path d="M3 4l5 5v10h10v-3h-10" stroke="#000" fill="#fff"/><path d="M8 16l10 0 0 3-10 0z" fill="#777"/></svg><div class="a b" style="left:59px;top:625px;width:18px;height:24px"></div><svg class="a" style="left:59px;top:625px;" width="18" height="24" viewBox="0 0 18 24"><path d="M9 3v8M14 3v8" stroke="#000" stroke-width="1" fill="none"/><circle cx="9" cy="5" r="2" fill="none" stroke="#000" stroke-width="1"/><circle cx="14" cy="5" r="2" fill="none" stroke="#000" stroke-width="1"/><path d="M9 11l2.5 10l2.5-10z" fill="#000"/></svg><svg class="a" style="left:5px;top:651px;" width="14" height="13" viewBox="0 0 14 13"><rect x="0" y="0" width="13" height="12" fill="#fbf8f8"/><path d="M0.5 12V0.5H13" stroke="#6a6060" stroke-width="1" fill="none"/><path d="M1.5 11V1.5H12" stroke="#a89c9c" stroke-width="1" fill="none"/><path d="M3 6l2.5 3l5.5-6.5" stroke="#000" stroke-width="1.8" fill="none"/></svg><svg class="a" style="left:23px;top:651px;" width="14" height="13" viewBox="0 0 14 13"><rect x="0" y="0" width="13" height="12" fill="#fbf8f8"/><path d="M0.5 12V0.5H13" stroke="#6a6060" stroke-width="1" fill="none"/><path d="M1.5 11V1.5H12" stroke="#a89c9c" stroke-width="1" fill="none"/><path d="M3 6l2.5 3l5.5-6.5" stroke="#000" stroke-width="1.8" fill="none"/></svg><svg class="a" style="left:43px;top:651px;" width="14" height="13" viewBox="0 0 14 13"><rect x="0" y="0" width="13" height="12" fill="#fbf8f8"/><path d="M0.5 12V0.5H13" stroke="#6a6060" stroke-width="1" fill="none"/><path d="M1.5 11V1.5H12" stroke="#a89c9c" stroke-width="1" fill="none"/><path d="M3 6l2.5 3l5.5-6.5" stroke="#000" stroke-width="1.8" fill="none"/></svg><div class="a" style="left:78px;top:84px;width:918px;height:581px;background:#000"></div><svg class="a" style="left:0;top:0" width="996" height="720" viewBox="0 0 996 720"><path d="M385,136 L484.4,159.6 C483.17,164.67 478.98,179.10 477,190 C475.02,200.90 473.45,215.00 472.5,225 C471.55,235.00 471.05,242.67 471.3,250 C471.55,257.33 471.30,263.70 474,269 C476.70,274.30 481.73,279.23 487.5,281.8 C493.27,284.37 505.08,283.97 508.6,284.4 L515.8,285 L520,331 L475.9,336.3 L520.2,344 C518.77,355.92 512.80,392.83 511.6,415.5 C510.40,438.17 511.22,456.72 513,480 C514.78,503.28 520.75,542.67 522.3,555.2 L524,582 C517.75,582.38 501.78,581.80 486.5,584.3 C471.22,586.80 450.22,592.63 432.3,597 C414.38,601.37 387.88,608.25 379,610.5 C373.23,598.25 352.58,555.00 344.4,537 C336.22,519.00 333.02,510.83 329.9,502.5 C326.78,494.17 326.43,492.08 325.7,487 C324.97,481.92 325.53,474.50 325.5,472 C325.47,458.10 325.72,406.43 325.3,388.6 C324.88,370.77 324.30,373.10 323,365 C321.70,356.90 318.42,344.17 317.5,340 C315.33,326.17 307.25,275.33 304.5,257 C301.75,238.67 301.42,236.50 301,230 C300.58,223.50 300.50,221.67 302,218 C303.50,214.33 306.33,210.67 310,208 C313.67,205.33 321.67,203.00 324,202 C327.50,200.83 338.17,198.50 345,195 C351.83,191.50 359.50,186.33 365,181 C370.50,175.67 374.67,170.50 378,163 C381.33,155.50 383.83,140.50 385,136" stroke="#3cbc4c" stroke-width="1.35" fill="none" stroke-linejoin="round" stroke-linecap="round"/><path d="M392.2,144.4 L475.6,165.6 C474.58,170.50 471.27,184.27 469.5,195 C467.73,205.73 465.92,220.83 465,230 C464.08,239.17 463.67,243.50 464,250 C464.33,256.50 464.05,262.88 467,269 C469.95,275.12 474.53,282.87 481.7,286.7 C488.87,290.53 505.28,291.12 510,292 L512.5,324.6 L429.6,335.3 L512.8,348.6 C511.58,359.75 506.47,393.60 505.5,415.5 C504.53,437.40 505.42,456.70 507,480 C508.58,503.30 513.67,542.75 515,555.3 C510.25,555.62 500.17,555.42 486.5,557.2 C472.83,558.98 451.82,561.48 433,566 C414.18,570.52 383.50,581.25 373.6,584.3 C370.13,576.92 359.07,553.88 352.8,540 C346.53,526.12 339.43,510.03 336,501 C332.57,491.97 332.87,490.63 332.2,485.8 C331.53,480.97 332.03,474.30 332,472 C331.95,458.10 332.12,406.43 331.7,388.6 C331.28,370.77 330.85,373.10 329.5,365 C328.15,356.90 324.58,344.17 323.6,340 C321.43,325.87 313.20,273.53 310.6,255.2 C308.00,236.87 308.27,235.87 308,230 C307.73,224.13 307.67,223.17 309,220 C310.33,216.83 313.17,213.00 316,211 C318.83,209.00 324.33,208.50 326,208 C329.67,206.83 341.00,204.33 348,201 C355.00,197.67 362.00,193.50 368,188 C374.00,182.50 379.97,175.27 384,168 C388.03,160.73 390.83,148.33 392.2,144.4" stroke="#d8d46c" stroke-width="1.15" fill="none" stroke-linejoin="round" stroke-linecap="round"/><path d="M345.3,195 L345.3,537" stroke="#48c4c0" stroke-width="1.4" fill="none" stroke-linejoin="round" stroke-linecap="round"/><path d="M429.6,335.3 L424.2,428.9 C425.17,440.75 428.53,478.32 430,500 C431.47,521.68 432.50,549.17 433,559" stroke="#eeeeee" stroke-width="1.2" fill="none" stroke-linejoin="round" stroke-linecap="round"/><path d="M429.6,335.3 L440,428.9 C439.33,440.75 437.17,478.32 436,500 C434.83,521.68 433.50,549.17 433,559" stroke="#eeeeee" stroke-width="1.2" fill="none" stroke-linejoin="round" stroke-linecap="round"/><path d="M372.8,270.5 L372.8,470" stroke="#c0c0c0" stroke-width="1.6" fill="none" stroke-linejoin="round" stroke-linecap="round"/><path d="M363.9,461.5 L372.9,470.3 L381.9,461.5" stroke="#c0c0c0" stroke-width="1.3" fill="none" stroke-linejoin="round" stroke-linecap="round"/><rect x="369" y="263.2" width="7" height="7" fill="none" stroke="#d0d0d0" stroke-width="1.2"/><path d="M370,365 L370,369" stroke="#eeeeee" stroke-width="1" fill="none" stroke-linejoin="round" stroke-linecap="round"/><circle cx="370" cy="377" r="1.8" stroke="#ddd" fill="none" stroke-width="1"/><path d="M310.6,255 L321.3,254" stroke="#eeeeee" stroke-width="1.1" fill="none" stroke-linejoin="round" stroke-linecap="round"/><path d="M332,388.6 L343,388" stroke="#eeeeee" stroke-width="1.1" fill="none" stroke-linejoin="round" stroke-linecap="round"/><path d="M332,472 L343,472" stroke="#eeeeee" stroke-width="1.1" fill="none" stroke-linejoin="round" stroke-linecap="round"/><path d="M453.5,250 L463.8,250" stroke="#eeeeee" stroke-width="1.1" fill="none" stroke-linejoin="round" stroke-linecap="round"/><path d="M494,415.5 L505,415.5" stroke="#eeeeee" stroke-width="1.1" fill="none" stroke-linejoin="round" stroke-linecap="round"/><path d="M374,584 L377.8,575.6" stroke="#eeeeee" stroke-width="1.1" fill="none" stroke-linejoin="round" stroke-linecap="round"/><path d="M508,548.4 L515,555" stroke="#eeeeee" stroke-width="1.1" fill="none" stroke-linejoin="round" stroke-linecap="round"/><path d="M326,208 L329,219" stroke="#eeeeee" stroke-width="1.1" fill="none" stroke-linejoin="round" stroke-linecap="round"/><polygon points="383.8,132.2 386.2,132.2 388.8,134.8 388.8,137.2 386.2,139.8 383.8,139.8 381.2,137.2 381.2,134.8" stroke="#f0f0f0" stroke-width="1.1" fill="#000" stroke-linejoin="round"/><polygon points="391.0,140.7 393.4,140.7 396.0,143.3 396.0,145.7 393.4,148.3 391.0,148.3 388.4,145.7 388.4,143.3" stroke="#f0f0f0" stroke-width="1.1" fill="#000" stroke-linejoin="round"/><polygon points="483.2,155.8 485.6,155.8 488.2,158.4 488.2,160.8 485.6,163.4 483.2,163.4 480.6,160.8 480.6,158.4" stroke="#f0f0f0" stroke-width="1.1" fill="#000" stroke-linejoin="round"/><polygon points="474.4,161.8 476.8,161.8 479.4,164.4 479.4,166.8 476.8,169.4 474.4,169.4 471.8,166.8 471.8,164.4" stroke="#f0f0f0" stroke-width="1.1" fill="#000" stroke-linejoin="round"/><polygon points="514.6,281.2 517.0,281.2 519.6,283.8 519.6,286.2 517.0,288.8 514.6,288.8 512.0,286.2 512.0,283.8" stroke="#f0f0f0" stroke-width="1.1" fill="#000" stroke-linejoin="round"/><polygon points="508.8,288.2 511.2,288.2 513.8,290.8 513.8,293.2 511.2,295.8 508.8,295.8 506.2,293.2 506.2,290.8" stroke="#f0f0f0" stroke-width="1.1" fill="#000" stroke-linejoin="round"/><polygon points="511.3,320.8 513.7,320.8 516.3,323.4 516.3,325.8 513.7,328.4 511.3,328.4 508.7,325.8 508.7,323.4" stroke="#f0f0f0" stroke-width="1.1" fill="#000" stroke-linejoin="round"/><polygon points="518.8,327.2 521.2,327.2 523.8,329.8 523.8,332.2 521.2,334.8 518.8,334.8 516.2,332.2 516.2,329.8" stroke="#f0f0f0" stroke-width="1.1" fill="#000" stroke-linejoin="round"/><polygon points="428.4,331.5 430.8,331.5 433.4,334.1 433.4,336.5 430.8,339.1 428.4,339.1 425.8,336.5 425.8,334.1" stroke="#f0f0f0" stroke-width="1.1" fill="#000" stroke-linejoin="round"/><polygon points="474.7,332.5 477.1,332.5 479.7,335.1 479.7,337.5 477.1,340.1 474.7,340.1 472.1,337.5 472.1,335.1" stroke="#f0f0f0" stroke-width="1.1" fill="#000" stroke-linejoin="round"/><polygon points="519.0,340.2 521.4,340.2 524.0,342.8 524.0,345.2 521.4,347.8 519.0,347.8 516.4,345.2 516.4,342.8" stroke="#f0f0f0" stroke-width="1.1" fill="#000" stroke-linejoin="round"/><polygon points="511.6,344.8 514.0,344.8 516.6,347.4 516.6,349.8 514.0,352.4 511.6,352.4 509.0,349.8 509.0,347.4" stroke="#f0f0f0" stroke-width="1.1" fill="#000" stroke-linejoin="round"/><polygon points="324.3,384.8 326.7,384.8 329.3,387.4 329.3,389.8 326.7,392.4 324.3,392.4 321.7,389.8 321.7,387.4" stroke="#f0f0f0" stroke-width="1.1" fill="#000" stroke-linejoin="round"/><polygon points="330.8,384.8 333.2,384.8 335.8,387.4 335.8,389.8 333.2,392.4 330.8,392.4 328.2,389.8 328.2,387.4" stroke="#f0f0f0" stroke-width="1.1" fill="#000" stroke-linejoin="round"/><polygon points="324.5,468.2 326.9,468.2 329.5,470.8 329.5,473.2 326.9,475.8 324.5,475.8 321.9,473.2 321.9,470.8" stroke="#f0f0f0" stroke-width="1.1" fill="#000" stroke-linejoin="round"/><polygon points="331.0,468.2 333.4,468.2 336.0,470.8 336.0,473.2 333.4,475.8 331.0,475.8 328.4,473.2 328.4,470.8" stroke="#f0f0f0" stroke-width="1.1" fill="#000" stroke-linejoin="round"/><polygon points="423.0,425.1 425.4,425.1 428.0,427.7 428.0,430.1 425.4,432.7 423.0,432.7 420.4,430.1 420.4,427.7" stroke="#f0f0f0" stroke-width="1.1" fill="#000" stroke-linejoin="round"/><polygon points="430.8,425.1 433.2,425.1 435.8,427.7 435.8,430.1 433.2,432.7 430.8,432.7 428.2,430.1 428.2,427.7" stroke="#f0f0f0" stroke-width="1.1" fill="#000" stroke-linejoin="round"/><polygon points="438.8,425.1 441.2,425.1 443.8,427.7 443.8,430.1 441.2,432.7 438.8,432.7 436.2,430.1 436.2,427.7" stroke="#f0f0f0" stroke-width="1.1" fill="#000" stroke-linejoin="round"/><polygon points="432.0,559.3 434.4,559.3 437.0,561.9 437.0,564.3 434.4,566.9 432.0,566.9 429.4,564.3 429.4,561.9" stroke="#f0f0f0" stroke-width="1.1" fill="#000" stroke-linejoin="round"/><polygon points="514.2,551.6 516.6,551.6 519.2,554.2 519.2,556.6 516.6,559.2 514.2,559.2 511.6,556.6 511.6,554.2" stroke="#f0f0f0" stroke-width="1.1" fill="#000" stroke-linejoin="round"/><polygon points="521.1,551.0 523.5,551.0 526.1,553.6 526.1,556.0 523.5,558.6 521.1,558.6 518.5,556.0 518.5,553.6" stroke="#f0f0f0" stroke-width="1.1" fill="#000" stroke-linejoin="round"/><polygon points="522.6,578.2 525.0,578.2 527.6,580.8 527.6,583.2 525.0,585.8 522.6,585.8 520.0,583.2 520.0,580.8" stroke="#f0f0f0" stroke-width="1.1" fill="#000" stroke-linejoin="round"/><polygon points="377.8,606.7 380.2,606.7 382.8,609.3 382.8,611.7 380.2,614.3 377.8,614.3 375.2,611.7 375.2,609.3" stroke="#f0f0f0" stroke-width="1.1" fill="#000" stroke-linejoin="round"/><polygon points="372.4,580.5 374.8,580.5 377.4,583.1 377.4,585.5 374.8,588.1 372.4,588.1 369.8,585.5 369.8,583.1" stroke="#f0f0f0" stroke-width="1.1" fill="#000" stroke-linejoin="round"/><polygon points="365.1,582.8 367.5,582.8 370.1,585.4 370.1,587.8 367.5,590.4 365.1,590.4 362.5,587.8 362.5,585.4" stroke="#f0f0f0" stroke-width="1.1" fill="#000" stroke-linejoin="round"/><polygon points="343.9,536.6 346.3,536.6 348.9,539.2 348.9,541.6 346.3,544.2 343.9,544.2 341.3,541.6 341.3,539.2" stroke="#f0f0f0" stroke-width="1.1" fill="#000" stroke-linejoin="round"/><polygon points="343.8,191.2 346.2,191.2 348.8,193.8 348.8,196.2 346.2,198.8 343.8,198.8 341.2,196.2 341.2,193.8" stroke="#3cbc4c" stroke-width="1.1" fill="#000" stroke-linejoin="round"/><polygon points="322.8,198.2 325.2,198.2 327.8,200.8 327.8,203.2 325.2,205.8 322.8,205.8 320.2,203.2 320.2,200.8" stroke="#3cbc4c" stroke-width="1.1" fill="#000" stroke-linejoin="round"/><polygon points="303.3,252.9 305.7,252.9 308.3,255.5 308.3,257.9 305.7,260.5 303.3,260.5 300.7,257.9 300.7,255.5" stroke="#3cbc4c" stroke-width="1.1" fill="#000" stroke-linejoin="round"/><polygon points="469.8,246.2 472.2,246.2 474.8,248.8 474.8,251.2 472.2,253.8 469.8,253.8 467.2,251.2 467.2,248.8" stroke="#3cbc4c" stroke-width="1.1" fill="#000" stroke-linejoin="round"/><polygon points="507.4,280.6 509.8,280.6 512.4,283.2 512.4,285.6 509.8,288.2 507.4,288.2 504.8,285.6 504.8,283.2" stroke="#3cbc4c" stroke-width="1.1" fill="#000" stroke-linejoin="round"/><polygon points="510.4,411.7 512.8,411.7 515.4,414.3 515.4,416.7 512.8,419.3 510.4,419.3 507.8,416.7 507.8,414.3" stroke="#3cbc4c" stroke-width="1.1" fill="#000" stroke-linejoin="round"/><polygon points="346.8,197.2 349.2,197.2 351.8,199.8 351.8,202.2 349.2,204.8 346.8,204.8 344.2,202.2 344.2,199.8" stroke="#d8d46c" stroke-width="1.1" fill="#000" stroke-linejoin="round"/><polygon points="324.8,204.2 327.2,204.2 329.8,206.8 329.8,209.2 327.2,211.8 324.8,211.8 322.2,209.2 322.2,206.8" stroke="#d8d46c" stroke-width="1.1" fill="#000" stroke-linejoin="round"/><polygon points="309.4,251.4 311.8,251.4 314.4,254.0 314.4,256.4 311.8,259.0 309.4,259.0 306.8,256.4 306.8,254.0" stroke="#d8d46c" stroke-width="1.1" fill="#000" stroke-linejoin="round"/><polygon points="462.6,246.2 465.0,246.2 467.6,248.8 467.6,251.2 465.0,253.8 462.6,253.8 460.0,251.2 460.0,248.8" stroke="#d8d46c" stroke-width="1.1" fill="#000" stroke-linejoin="round"/><polygon points="504.3,411.7 506.7,411.7 509.3,414.3 509.3,416.7 506.7,419.3 504.3,419.3 501.7,416.7 501.7,414.3" stroke="#d8d46c" stroke-width="1.1" fill="#000" stroke-linejoin="round"/><circle cx="404.3" cy="295" r="3" stroke="#b030b8" stroke-width="1.2" fill="none"/><path d="M407,295 L411,295" stroke="#b030b8" stroke-width="1" fill="none" stroke-linejoin="round" stroke-linecap="round"/><path d="M745,163 C743.00,162.12 736.33,159.87 733,157.7 C729.67,155.53 727.37,152.37 725,150 C722.63,147.63 719.83,144.58 718.8,143.5 L618.4,167.2 C619.17,171.83 621.65,185.37 623,195 C624.35,204.63 625.77,216.00 626.5,225 C627.23,234.00 627.98,241.17 627.4,249 C626.82,256.83 625.90,265.00 623,272 C620.10,279.00 614.33,286.33 610,291 C605.67,295.67 601.70,297.90 597,300 C592.30,302.10 584.33,303.00 581.8,303.6 C582.32,310.15 583.73,325.55 584.9,342.9 C586.07,360.25 587.87,392.88 588.8,407.7 C589.73,422.52 590.97,423.85 590.5,431.8 C590.03,439.75 588.80,436.12 586,455.4 C583.20,474.68 575.75,532.15 573.7,547.5 L575.8,574 C593.43,574.30 649.07,575.13 681.6,575.8 C714.13,576.47 756.10,577.63 771,578 L773.2,550.4 C772.08,533.00 767.73,469.28 766.5,446 C765.27,422.72 765.80,423.37 765.8,410.7 C765.80,398.03 766.38,376.78 766.5,370" stroke="#3cbc4c" stroke-width="1.35" fill="none" stroke-linejoin="round" stroke-linecap="round"/><path d="M745,168.5 C743.38,168.08 738.47,167.42 735.3,166 C732.13,164.58 729.35,162.37 726,160 C722.65,157.63 717.00,153.17 715.2,151.8 L626.2,173 C626.92,177.17 629.28,189.33 630.5,198 C631.72,206.67 632.88,216.50 633.5,225 C634.12,233.50 634.78,241.50 634.2,249 C633.62,256.50 632.37,263.17 630,270 C627.63,276.83 624.00,284.67 620,290 C616.00,295.33 611.13,298.67 606,302 C600.87,305.33 592.00,308.67 589.2,310 C589.58,315.48 590.53,326.62 591.5,342.9 C592.47,359.18 594.32,393.18 595,407.7 C595.68,422.22 595.53,424.02 595.6,430 C595.67,435.98 597.78,424.02 595.4,443.6 C593.02,463.18 583.65,530.18 581.3,547.5 C598.22,547.90 651.93,549.42 682.8,549.9 C713.67,550.38 752.55,550.32 766.5,550.4 C765.58,533.08 762.28,469.78 761,446.5 C759.72,423.22 758.92,423.45 758.8,410.7 C758.68,397.95 760.05,376.78 760.3,370" stroke="#d8d46c" stroke-width="1.15" fill="none" stroke-linejoin="round" stroke-linecap="round"/><path d="M684,302.6 L672.8,410.6 L682.8,545" stroke="#b81818" stroke-width="1.25" fill="none" stroke-linejoin="round" stroke-linecap="round"/><path d="M684,302.6 L692.7,410.6 L682.8,545" stroke="#b81818" stroke-width="1.25" fill="none" stroke-linejoin="round" stroke-linecap="round"/><path d="M736.3,255 L736.3,419" stroke="#c0c0c0" stroke-width="1.6" fill="none" stroke-linejoin="round" stroke-linecap="round"/><path d="M726.7,409 L735.9,419 L746,409" stroke="#c0c0c0" stroke-width="1.3" fill="none" stroke-linejoin="round" stroke-linecap="round"/><rect x="733" y="248" width="7" height="7" fill="none" stroke="#d0d0d0" stroke-width="1.2"/><path d="M735,333 L735,336" stroke="#eeeeee" stroke-width="1" fill="none" stroke-linejoin="round" stroke-linecap="round"/><circle cx="735" cy="347" r="1.5" stroke="#ddd" fill="none" stroke-width="1"/><path d="M634,249 L645.6,249" stroke="#eeeeee" stroke-width="1.1" fill="none" stroke-linejoin="round" stroke-linecap="round"/><path d="M591.5,343 L601.8,343" stroke="#eeeeee" stroke-width="1.1" fill="none" stroke-linejoin="round" stroke-linecap="round"/><path d="M595,407.7 L606.7,407.7" stroke="#eeeeee" stroke-width="1.1" fill="none" stroke-linejoin="round" stroke-linecap="round"/><path d="M748,410.7 L758.8,410.7" stroke="#d8d46c" stroke-width="1.1" fill="none" stroke-linejoin="round" stroke-linecap="round"/><polygon points="617.2,163.4 619.6,163.4 622.2,166.0 622.2,168.4 619.6,171.0 617.2,171.0 614.6,168.4 614.6,166.0" stroke="#f0f0f0" stroke-width="1.1" fill="#000" stroke-linejoin="round"/><polygon points="717.6,139.7 720.0,139.7 722.6,142.3 722.6,144.7 720.0,147.3 717.6,147.3 715.0,144.7 715.0,142.3" stroke="#f0f0f0" stroke-width="1.1" fill="#000" stroke-linejoin="round"/><polygon points="625.0,169.2 627.4,169.2 630.0,171.8 630.0,174.2 627.4,176.8 625.0,176.8 622.4,174.2 622.4,171.8" stroke="#f0f0f0" stroke-width="1.1" fill="#000" stroke-linejoin="round"/><polygon points="714.0,148.0 716.4,148.0 719.0,150.6 719.0,153.0 716.4,155.6 714.0,155.6 711.4,153.0 711.4,150.6" stroke="#f0f0f0" stroke-width="1.1" fill="#000" stroke-linejoin="round"/><polygon points="580.6,299.8 583.0,299.8 585.6,302.4 585.6,304.8 583.0,307.4 580.6,307.4 578.0,304.8 578.0,302.4" stroke="#f0f0f0" stroke-width="1.1" fill="#000" stroke-linejoin="round"/><polygon points="588.0,306.2 590.4,306.2 593.0,308.8 593.0,311.2 590.4,313.8 588.0,313.8 585.4,311.2 585.4,308.8" stroke="#f0f0f0" stroke-width="1.1" fill="#000" stroke-linejoin="round"/><polygon points="626.2,245.2 628.6,245.2 631.2,247.8 631.2,250.2 628.6,252.8 626.2,252.8 623.6,250.2 623.6,247.8" stroke="#f0f0f0" stroke-width="1.1" fill="#000" stroke-linejoin="round"/><polygon points="633.0,245.2 635.4,245.2 638.0,247.8 638.0,250.2 635.4,252.8 633.0,252.8 630.4,250.2 630.4,247.8" stroke="#f0f0f0" stroke-width="1.1" fill="#000" stroke-linejoin="round"/><polygon points="682.8,298.8 685.2,298.8 687.8,301.4 687.8,303.8 685.2,306.4 682.8,306.4 680.2,303.8 680.2,301.4" stroke="#f0f0f0" stroke-width="1.1" fill="#000" stroke-linejoin="round"/><polygon points="671.6,406.8 674.0,406.8 676.6,409.4 676.6,411.8 674.0,414.4 671.6,414.4 669.0,411.8 669.0,409.4" stroke="#f0f0f0" stroke-width="1.1" fill="#000" stroke-linejoin="round"/><polygon points="681.8,406.8 684.2,406.8 686.8,409.4 686.8,411.8 684.2,414.4 681.8,414.4 679.2,411.8 679.2,409.4" stroke="#f0f0f0" stroke-width="1.1" fill="#000" stroke-linejoin="round"/><polygon points="691.5,406.8 693.9,406.8 696.5,409.4 696.5,411.8 693.9,414.4 691.5,414.4 688.9,411.8 688.9,409.4" stroke="#f0f0f0" stroke-width="1.1" fill="#000" stroke-linejoin="round"/><polygon points="572.5,543.7 574.9,543.7 577.5,546.3 577.5,548.7 574.9,551.3 572.5,551.3 569.9,548.7 569.9,546.3" stroke="#f0f0f0" stroke-width="1.1" fill="#000" stroke-linejoin="round"/><polygon points="580.1,543.7 582.5,543.7 585.1,546.3 585.1,548.7 582.5,551.3 580.1,551.3 577.5,548.7 577.5,546.3" stroke="#f0f0f0" stroke-width="1.1" fill="#000" stroke-linejoin="round"/><polygon points="574.6,570.2 577.0,570.2 579.6,572.8 579.6,575.2 577.0,577.8 574.6,577.8 572.0,575.2 572.0,572.8" stroke="#f0f0f0" stroke-width="1.1" fill="#000" stroke-linejoin="round"/><polygon points="681.6,546.1 684.0,546.1 686.6,548.7 686.6,551.1 684.0,553.7 681.6,553.7 679.0,551.1 679.0,548.7" stroke="#f0f0f0" stroke-width="1.1" fill="#000" stroke-linejoin="round"/><polygon points="765.3,546.6 767.7,546.6 770.3,549.2 770.3,551.6 767.7,554.2 765.3,554.2 762.7,551.6 762.7,549.2" stroke="#f0f0f0" stroke-width="1.1" fill="#000" stroke-linejoin="round"/><polygon points="772.0,546.6 774.4,546.6 777.0,549.2 777.0,551.6 774.4,554.2 772.0,554.2 769.4,551.6 769.4,549.2" stroke="#f0f0f0" stroke-width="1.1" fill="#000" stroke-linejoin="round"/><polygon points="769.8,574.2 772.2,574.2 774.8,576.8 774.8,579.2 772.2,581.8 769.8,581.8 767.2,579.2 767.2,576.8" stroke="#f0f0f0" stroke-width="1.1" fill="#000" stroke-linejoin="round"/><polygon points="583.7,339.1 586.1,339.1 588.7,341.7 588.7,344.1 586.1,346.7 583.7,346.7 581.1,344.1 581.1,341.7" stroke="#3cbc4c" stroke-width="1.1" fill="#000" stroke-linejoin="round"/><polygon points="587.6,403.9 590.0,403.9 592.6,406.5 592.6,408.9 590.0,411.5 587.6,411.5 585.0,408.9 585.0,406.5" stroke="#3cbc4c" stroke-width="1.1" fill="#000" stroke-linejoin="round"/><polygon points="680.4,572.0 682.8,572.0 685.4,574.6 685.4,577.0 682.8,579.6 680.4,579.6 677.8,577.0 677.8,574.6" stroke="#3cbc4c" stroke-width="1.1" fill="#000" stroke-linejoin="round"/><polygon points="764.6,406.9 767.0,406.9 769.6,409.5 769.6,411.9 767.0,414.5 764.6,414.5 762.0,411.9 762.0,409.5" stroke="#3cbc4c" stroke-width="1.1" fill="#000" stroke-linejoin="round"/><polygon points="590.3,339.1 592.7,339.1 595.3,341.7 595.3,344.1 592.7,346.7 590.3,346.7 587.7,344.1 587.7,341.7" stroke="#d8d46c" stroke-width="1.1" fill="#000" stroke-linejoin="round"/><polygon points="593.8,403.9 596.2,403.9 598.8,406.5 598.8,408.9 596.2,411.5 593.8,411.5 591.2,408.9 591.2,406.5" stroke="#d8d46c" stroke-width="1.1" fill="#000" stroke-linejoin="round"/><polygon points="757.6,406.9 760.0,406.9 762.6,409.5 762.6,411.9 760.0,414.5 757.6,414.5 755.0,411.9 755.0,409.5" stroke="#d8d46c" stroke-width="1.1" fill="#000" stroke-linejoin="round"/><circle cx="691" cy="218" r="3" stroke="#dcd474" stroke-width="1.2" fill="none"/><path d="M694,218 L698,218" stroke="#d8d46c" stroke-width="1" fill="none" stroke-linejoin="round" stroke-linecap="round"/></svg><div class="a t" style="left:405.4px;top:301px;font-size:14px;letter-spacing:0.822px;color:#e8e8e8;-webkit-text-stroke:0.35px #e8e8e8">Полочка</div><div class="a t" style="left:692.3px;top:224.5px;font-size:14px;letter-spacing:0.875px;color:#e8e8e8;-webkit-text-stroke:0.35px #e8e8e8">В.Спинка</div><div class="a" style="left:0px;top:665px;width:996px;height:55px;background:#ecdfe1;border-top:1px solid #fff"></div><div class="a" style="left:0px;top:665px;width:82px;height:53px;background:#cde8d3;border-style:solid;border-width:2px 1px 1px 2px;border-color:#6a6262 #fff #fff #6a6262"></div><div class="a t" style="left:4.5px;top:669.8px;font-size:11.5px;letter-spacing:0.634px;font-weight:bold;font-family:'Liberation Mono',monospace;color:#000;-webkit-text-stroke:0.3px #000">16.35</div><div class="a b" style="left:87px;top:666px;width:24px;height:24px"></div><svg class="a" style="left:87px;top:666px;" width="24" height="24" viewBox="0 0 24 24"><path d="M4 8h6M13 8h6M4 13h6M13 13h6M4 18h6M13 18h6" stroke="#777" stroke-width="1" fill="none"/><path d="M17 5l2 1" stroke="#777" stroke-width="1" fill="none"/></svg><div class="a b" style="left:112px;top:666px;width:25px;height:24px"></div><svg class="a" style="left:112px;top:666px;" width="25" height="24" viewBox="0 0 25 24"><path d="M4 8h7M14 8h7M4 13h17M4 18h7M14 18h7" stroke="#555" stroke-width="1.2" fill="none"/></svg><div class="a" style="left:140px;top:666px;width:68px;height:23px;background:#fdfbfb;border-style:solid;border-width:2px 1px 1px 2px;border-color:#6a6060 #fff #fff #6a6060"></div><div class="a b" style="left:212px;top:666px;width:24px;height:24px"></div><svg class="a" style="left:212px;top:666px;" width="24" height="24" viewBox="0 0 24 24"><path d="M5 8h14M5 12h14M5 16h14" stroke="#666" stroke-width="1" fill="none"/><rect x="5.5" y="6.5" width="14" height="12" fill="none" stroke="#888" stroke-width="1"/></svg><div class="a b" style="left:238px;top:666px;width:25px;height:24px"></div><svg class="a" style="left:238px;top:666px;" width="25" height="24" viewBox="0 0 25 24"><rect x="3.5" y="4.5" width="18" height="16" fill="none" stroke="#999" stroke-width="1"/><path d="M3 8.5h18M3 12.5h18M3 16.5h18M9.5 4v16M15.5 4v16" stroke="#999" stroke-width="1" fill="none"/></svg><div class="a b" style="left:270px;top:666px;width:25px;height:24px"></div><svg class="a" style="left:270px;top:666px;" width="25" height="24" viewBox="0 0 25 24"><path d="M10 5h4v5h5v4h-5v5h-4v-5h-5v-4h5z" fill="#fff" stroke="#000" stroke-width="1.2"/></svg><div class="a b" style="left:296px;top:666px;width:24px;height:24px"></div><svg class="a" style="left:296px;top:666px;" width="24" height="24" viewBox="0 0 24 24"><rect x="5.5" y="10.5" width="13" height="3" fill="#fff" stroke="#000" stroke-width="1.2"/></svg><div class="a b" style="left:323px;top:666px;width:24px;height:24px"></div><svg class="a" style="left:323px;top:666px;" width="24" height="24" viewBox="0 0 24 24"><text x="12" y="17" text-anchor="middle" font-size="12" font-weight="bold" font-family="Liberation Serif">L</text></svg><div class="a b" style="left:348px;top:666px;width:25px;height:24px"></div><svg class="a" style="left:348px;top:666px;" width="25" height="24" viewBox="0 0 25 24"><rect x="3.5" y="9.5" width="18" height="6" fill="#fff" stroke="#000" stroke-width="1"/><path d="M6 9v3M9 9v2M12 9v3M15 9v2M18 9v3" stroke="#000" stroke-width="1" fill="none"/></svg><div class="a b" style="left:375px;top:666px;width:23px;height:24px"></div><svg class="a" style="left:375px;top:666px;" width="23" height="24" viewBox="0 0 23 24"><path d="M6 18l12-12" stroke="#000" stroke-width="1" fill="none"/><circle cx="5" cy="19" r="1.5" fill="#000" stroke="#000" stroke-width="1"/><circle cx="19" cy="5" r="1.5" fill="#000" stroke="#000" stroke-width="1"/><polygon points="8,16 10.43,14.379999999999999 10.43,17.62" fill="#000"/><polygon points="16,8 13.57,6.38 13.57,9.620000000000001" fill="#000"/></svg><div class="a b" style="left:399px;top:666px;width:26px;height:24px"></div><svg class="a" style="left:399px;top:666px;" width="26" height="24" viewBox="0 0 26 24"><path d="M6 18l12-12" stroke="#000" stroke-width="1" fill="none"/><circle cx="5" cy="19" r="1.5" fill="#000" stroke="#000" stroke-width="1"/><circle cx="19" cy="5" r="1.5" fill="#000" stroke="#000" stroke-width="1"/><polygon points="8,16 10.43,14.379999999999999 10.43,17.62" fill="#000"/><polygon points="16,8 13.57,6.38 13.57,9.620000000000001" fill="#000"/><path d="M3 2l5 6M8 2l-5 6" stroke="#000" stroke-width="1" fill="none"/></svg><div class="a b" style="left:426px;top:666px;width:25px;height:24px"></div><svg class="a" style="left:426px;top:666px;" width="25" height="24" viewBox="0 0 25 24"><path d="M6 18l12-12" stroke="#000" stroke-width="1" fill="none"/><circle cx="5" cy="19" r="1.5" fill="#000" stroke="#000" stroke-width="1"/><circle cx="19" cy="5" r="1.5" fill="#000" stroke="#000" stroke-width="1"/><polygon points="8,16 10.43,14.379999999999999 10.43,17.62" fill="#000"/><polygon points="16,8 13.57,6.38 13.57,9.620000000000001" fill="#000"/><path d="M3 2l2.5 3l2.5-3M5.5 5v4" stroke="#000" stroke-width="1" fill="none"/></svg><div class="a b" style="left:453px;top:666px;width:25px;height:24px"></div><svg class="a" style="left:453px;top:666px;" width="25" height="24" viewBox="0 0 25 24"><path d="M3 12h18" stroke="#000" stroke-width="1" fill="none"/><path d="M6 10h12" stroke="#000" stroke-width="1" fill="none"/><polygon points="5,10 7.916,8.056 7.916,11.944" fill="#000"/><polygon points="19,10 16.084,8.056 16.084,11.944" fill="#000"/><path d="M18 5v14" stroke="#000" stroke-width="1" fill="none"/><circle cx="5" cy="12" r="1.3" fill="#000" stroke="#000" stroke-width="1"/></svg><div class="a b" style="left:479px;top:666px;width:25px;height:24px"></div><svg class="a" style="left:479px;top:666px;" width="25" height="24" viewBox="0 0 25 24"><path d="M5 5v14M19 5v14M3 12h18" stroke="#000" stroke-width="1" fill="none"/><path d="M7 10h10" stroke="#000" stroke-width="1" fill="none"/><polygon points="6,10 8.916,8.056 8.916,11.944" fill="#000"/><polygon points="18,10 15.084,8.056 15.084,11.944" fill="#000"/></svg><div class="a b" style="left:508px;top:666px;width:23px;height:24px"></div><svg class="a" style="left:508px;top:666px;" width="23" height="24" viewBox="0 0 23 24"><rect x="6.5" y="4.5" width="11" height="15" rx="1" fill="#ddd" stroke="#000"/><rect x="8" y="6" width="8" height="3" fill="#555"/><path d="M8 11h2v2h-2zM11 11h2v2h-2zM14 11h2v2h-2zM8 14h2v2h-2zM11 14h2v2h-2z" fill="#333"/><path d="M14 14h2v3h-2z" fill="#d02020"/><path d="M8 17h2v2h-2z" fill="#d02020"/></svg><div class="a b" style="left:533px;top:666px;width:25px;height:24px"></div><svg class="a" style="left:533px;top:666px;" width="25" height="24" viewBox="0 0 25 24"><path d="M5 19 q2-12 10-13" stroke="#000" stroke-width="1.2" fill="none"/><circle cx="5" cy="19" r="1.5" fill="#000" stroke="#000" stroke-width="1"/><circle cx="16" cy="6" r="1.8" fill="#000" stroke="#000" stroke-width="1"/><text x="13" y="21" font-size="10" font-family="Liberation Sans">1.</text></svg><div class="a" style="left:559px;top:666px;width:433px;height:22px;background:#fdfbfb;border-style:solid;border-width:2px 1px 1px 2px;border-color:#6a6060 #fff #fff #6a6060"></div><div class="a t" style="left:564px;top:672.5px;font-size:12.5px;letter-spacing:0.214px;font-weight:bold;font-family:'Liberation Mono',monospace;color:#000;-webkit-text-stroke:0.3px #000">Укажите контур</div><div class="a" style="left:86px;top:692px;width:366px;height:23px;background:#e8dcdc;border-style:solid;border-width:1px;border-color:#9a8e8e #fff #fff #9a8e8e"></div><div class="a t" style="left:93.7px;top:697px;font-size:14px;letter-spacing:0.147px;font-weight:bold;color:#101010">В.Спинка {2} Верх</div><div class="a" style="left:452px;top:693px;width:85px;height:21px;background:#fdfbfb;border-style:solid;border-width:2px 1px 1px 2px;border-color:#6a6060 #fff #fff #6a6060"></div><div class="a" style="left:520px;top:695px;width:16px;height:18px;background:#ecdfe1;border-style:solid;border-width:1px;border-color:#fff #3a3232 #3a3232 #fff;box-shadow:inset -1px -1px #b4a8a8"></div><svg class="a" style="left:520px;top:695px;" width="16" height="18" viewBox="0 0 16 18"><polygon points="4,7 11,7 7.5,11" fill="#8a8282"/></svg><div class="a t" style="left:457px;top:698.5px;font-size:12px;letter-spacing:0.000px;font-weight:bold;font-family:'Liberation Mono',monospace;color:#000;-webkit-text-stroke:0.3px #000">92</div><div class="a" style="left:540px;top:693px;width:86px;height:21px;background:#fdfbfb;border-style:solid;border-width:2px 1px 1px 2px;border-color:#6a6060 #fff #fff #6a6060"></div><div class="a" style="left:609px;top:695px;width:16px;height:18px;background:#ecdfe1;border-style:solid;border-width:1px;border-color:#fff #3a3232 #3a3232 #fff;box-shadow:inset -1px -1px #b4a8a8"></div><svg class="a" style="left:609px;top:695px;" width="16" height="18" viewBox="0 0 16 18"><polygon points="4,7 11,7 7.5,11" fill="#8a8282"/></svg><div class="a t" style="left:545px;top:698.5px;font-size:12px;letter-spacing:0.000px;font-weight:bold;font-family:'Liberation Mono',monospace;color:#000;-webkit-text-stroke:0.3px #000">164</div><div class="a b" style="left:639px;top:690px;width:24px;height:25px"></div><svg class="a" style="left:639px;top:690px;" width="24" height="25" viewBox="0 0 24 25"><path d="M12.5 3 q2.5 3 1.5 7 l-1.5 5 q-1 2-3 1 q-1.5-2 0-5 l1-3 q0.5-3 2-5z" fill="#000"/><path d="M10 16 q-1 4 -6 5" stroke="#000" stroke-width="1.6" fill="none"/><path d="M11 8 l2 0 0 4-2 0z" fill="#fff"/></svg><div class="a b" style="left:668px;top:690px;width:24px;height:25px"></div><svg class="a" style="left:668px;top:690px;" width="24" height="25" viewBox="0 0 24 25"><path d="M3 21h18M6 17h9M8 17v4M13 17v4" stroke="#000" stroke-width="1.4" fill="none"/><path d="M5 14l9-10M7 16l9-10" stroke="#000" stroke-width="1.3" fill="none"/><path d="M15 9h3v8h-3z" fill="#000"/><polygon points="16.5,6 14.123999999999999,9.564 18.876,9.564" fill="#000"/></svg><div class="a b" style="left:695px;top:690px;width:25px;height:25px"></div><svg class="a" style="left:695px;top:690px;" width="25" height="25" viewBox="0 0 25 25"><path d="M11.5 5v16M4 13h15" stroke="#000" stroke-width="1.3" fill="none"/><polygon points="11.5,3 8.908,6.888 14.092,6.888" fill="#000"/><polygon points="21,13 17.112000000000002,10.408 17.112000000000002,15.592" fill="#000"/></svg><div class="a b" style="left:722px;top:690px;width:25px;height:25px"></div><svg class="a" style="left:722px;top:690px;" width="25" height="25" viewBox="0 0 25 25"><path d="M12 6v10h6" stroke="#b0a8a8" stroke-width="1.2" fill="none"/><polygon points="12,4 9.84,7.24 14.16,7.24" fill="#b0a8a8"/><polygon points="20,16 16.759999999999998,13.84 16.759999999999998,18.16" fill="#b0a8a8"/><path d="M6 10v11h11" stroke="#000" stroke-width="1.3" fill="none"/><polygon points="6,8 3.4079999999999995,11.888 8.592,11.888" fill="#000"/><polygon points="19,21 15.112,18.408 15.112,23.592" fill="#000"/></svg><div class="a b" style="left:750px;top:690px;width:24px;height:25px"></div><svg class="a" style="left:750px;top:690px;" width="24" height="25" viewBox="0 0 24 25"><path d="M6 7l12 12M18 7l-12 12" stroke="#a8a0a0" stroke-width="1" fill="none"/><path d="M11.5 5v16M4 13h15" stroke="#000" stroke-width="1.3" fill="none"/><polygon points="11.5,3 8.908,6.888 14.092,6.888" fill="#000"/><polygon points="21,13 17.112000000000002,10.408 17.112000000000002,15.592" fill="#000"/></svg><div class="a b" style="left:776px;top:690px;width:24px;height:25px"></div><svg class="a" style="left:776px;top:690px;" width="24" height="25" viewBox="0 0 24 25"><path d="M11 5q7 1 7 8" stroke="#a09898" stroke-width="1.2" fill="none"/><polygon points="18,14 16.056,11.084 19.944,11.084" fill="#a09898"/><path d="M6 6v15h11" stroke="#000" stroke-width="1.3" fill="none"/><polygon points="6,4 3.4079999999999995,7.888 8.592,7.888" fill="#000"/><polygon points="20,21 16.112000000000002,18.408 16.112000000000002,23.592" fill="#000"/></svg><div class="a" style="left:804px;top:691px;width:62px;height:24px;background:#e8dcdc;border-style:solid;border-width:1px;border-color:#9a8e8e #fff #fff #9a8e8e"></div><div class="a t" style="left:810px;top:696px;font-size:14.5px;letter-spacing:0.000px;font-weight:bold;color:#000">-8.63</div><div class="a" style="left:868px;top:691px;width:62px;height:24px;background:#e8dcdc;border-style:solid;border-width:1px;border-color:#9a8e8e #fff #fff #9a8e8e"></div><div class="a t" style="left:875px;top:696px;font-size:14.5px;letter-spacing:0.000px;font-weight:bold;color:#000">0.18</div><div class="a" style="left:932px;top:691px;width:60px;height:24px;background:#e8dcdc;border-style:solid;border-width:1px;border-color:#9a8e8e #fff #fff #9a8e8e"></div><div class="a t" style="left:937px;top:696px;font-size:14.5px;letter-spacing:0.000px;font-weight:bold;color:#000">8.63</div><div class="a" style="left:0px;top:716px;width:996px;height:4px;background:#ecdfe1;border-top:1px solid #7a6e6e"></div><div class="a" style="left:743px;top:93px;width:243px;height:277px;background:#ecdee1;border-style:solid;border-width:1px 2px 2px 1px;border-color:#f4eeee #1a1414 #1a1414 #f4eeee;box-shadow:inset 1px 1px #fff, inset -1px -1px #8a7e7e"></div><div class="a" style="left:746px;top:96px;width:237px;height:17px;background:linear-gradient(90deg,#0c2066 0%,#284a9a 35%,#6c94d4 70%,#a8cbf2 100%)"></div><div class="a t" style="left:747.7px;top:99px;font-size:12px;letter-spacing:-0.152px;font-weight:bold;color:#fff">Параметры контура</div><div class="a b" style="left:967px;top:98px;width:16px;height:14px"></div><svg class="a" style="left:967px;top:98px;" width="16" height="14" viewBox="0 0 16 14"><path d="M4.5 3.5l7 7M11.5 3.5l-7 7" stroke="#000" stroke-width="1.6"/></svg><div class="a" style="left:749px;top:126px;width:232px;height:128px;border-style:solid;border-width:1px;border-color:#9a8e8e #fff #fff #9a8e8e;box-shadow:inset 1px 1px #fff, inset -1px -1px #9a8e8e"></div><svg class="a" style="left:754px;top:134.4px;" width="12" height="12" viewBox="0 0 12 12"><circle cx="6" cy="6" r="5.5" fill="#fff"/><path d="M1.9 9.9 A5.5 5.5 0 0 1 9.9 1.9" stroke="#9a9090" stroke-width="1.1" fill="none"/><path d="M2.9 8.9 A4.2 4.2 0 0 1 8.9 2.9" stroke="#3a3232" stroke-width="1.1" fill="none"/><path d="M9.9 1.9 A5.5 5.5 0 0 1 1.9 9.9" stroke="#fff" stroke-width="1.2" fill="none"/></svg><div class="a t" style="left:771px;top:132.9px;font-size:14px;letter-spacing:0.044px;color:#140e0e;-webkit-text-stroke:0.2px #140e0e">Рабочий</div><svg class="a" style="left:754px;top:154.4px;" width="12" height="12" viewBox="0 0 12 12"><circle cx="6" cy="6" r="5.5" fill="#fff"/><path d="M1.9 9.9 A5.5 5.5 0 0 1 9.9 1.9" stroke="#9a9090" stroke-width="1.1" fill="none"/><path d="M2.9 8.9 A4.2 4.2 0 0 1 8.9 2.9" stroke="#3a3232" stroke-width="1.1" fill="none"/><path d="M9.9 1.9 A5.5 5.5 0 0 1 1.9 9.9" stroke="#fff" stroke-width="1.2" fill="none"/></svg><div class="a t" style="left:771px;top:152.9px;font-size:14px;letter-spacing:-0.072px;color:#140e0e;-webkit-text-stroke:0.2px #140e0e">Готовый вид</div><svg class="a" style="left:754px;top:175.2px;" width="12" height="12" viewBox="0 0 12 12"><circle cx="6" cy="6" r="5.5" fill="#fff"/><path d="M1.9 9.9 A5.5 5.5 0 0 1 9.9 1.9" stroke="#9a9090" stroke-width="1.1" fill="none"/><path d="M2.9 8.9 A4.2 4.2 0 0 1 8.9 2.9" stroke="#3a3232" stroke-width="1.1" fill="none"/><path d="M9.9 1.9 A5.5 5.5 0 0 1 1.9 9.9" stroke="#fff" stroke-width="1.2" fill="none"/></svg><div class="a t" style="left:771px;top:173.7px;font-size:14px;letter-spacing:-0.239px;color:#aaa0a0;text-shadow:1px 1px #fff">Надпись</div><svg class="a" style="left:754px;top:196.6px;" width="12" height="12" viewBox="0 0 12 12"><circle cx="6" cy="6" r="5.5" fill="#fff"/><path d="M1.9 9.9 A5.5 5.5 0 0 1 9.9 1.9" stroke="#9a9090" stroke-width="1.1" fill="none"/><path d="M2.9 8.9 A4.2 4.2 0 0 1 8.9 2.9" stroke="#3a3232" stroke-width="1.1" fill="none"/><path d="M9.9 1.9 A5.5 5.5 0 0 1 1.9 9.9" stroke="#fff" stroke-width="1.2" fill="none"/><circle cx="6" cy="6" r="1.9" fill="#000"/></svg><div class="a t" style="left:771px;top:195.1px;font-size:14px;letter-spacing:-0.117px;color:#140e0e;-webkit-text-stroke:0.2px #140e0e">Внутренний</div><svg class="a" style="left:754px;top:216px;" width="12" height="12" viewBox="0 0 12 12"><circle cx="6" cy="6" r="5.5" fill="#fff"/><path d="M1.9 9.9 A5.5 5.5 0 0 1 9.9 1.9" stroke="#9a9090" stroke-width="1.1" fill="none"/><path d="M2.9 8.9 A4.2 4.2 0 0 1 8.9 2.9" stroke="#3a3232" stroke-width="1.1" fill="none"/><path d="M9.9 1.9 A5.5 5.5 0 0 1 1.9 9.9" stroke="#fff" stroke-width="1.2" fill="none"/></svg><div class="a t" style="left:771px;top:214.5px;font-size:14px;letter-spacing:-0.220px;color:#140e0e;-webkit-text-stroke:0.2px #140e0e">Линия реза</div><svg class="a" style="left:754px;top:235.5px;" width="12" height="12" viewBox="0 0 12 12"><circle cx="6" cy="6" r="5.5" fill="#fff"/><path d="M1.9 9.9 A5.5 5.5 0 0 1 9.9 1.9" stroke="#9a9090" stroke-width="1.1" fill="none"/><path d="M2.9 8.9 A4.2 4.2 0 0 1 8.9 2.9" stroke="#3a3232" stroke-width="1.1" fill="none"/><path d="M9.9 1.9 A5.5 5.5 0 0 1 1.9 9.9" stroke="#fff" stroke-width="1.2" fill="none"/></svg><div class="a t" style="left:771px;top:234.0px;font-size:14px;letter-spacing:-0.246px;color:#aaa0a0;text-shadow:1px 1px #fff">Напр. болванки</div><svg class="a" style="left:894.7px;top:136px;" width="12" height="12" viewBox="0 0 12 12"><circle cx="6" cy="6" r="5.5" fill="#fff"/><path d="M1.9 9.9 A5.5 5.5 0 0 1 9.9 1.9" stroke="#9a9090" stroke-width="1.1" fill="none"/><path d="M2.9 8.9 A4.2 4.2 0 0 1 8.9 2.9" stroke="#3a3232" stroke-width="1.1" fill="none"/><path d="M9.9 1.9 A5.5 5.5 0 0 1 1.9 9.9" stroke="#fff" stroke-width="1.2" fill="none"/></svg><div class="a t" style="left:911px;top:134.5px;font-size:14px;letter-spacing:-0.238px;color:#aaa0a0;text-shadow:1px 1px #fff">Срез</div><svg class="a" style="left:894.7px;top:155px;" width="12" height="12" viewBox="0 0 12 12"><circle cx="6" cy="6" r="5.5" fill="#fff"/><path d="M1.9 9.9 A5.5 5.5 0 0 1 9.9 1.9" stroke="#9a9090" stroke-width="1.1" fill="none"/><path d="M2.9 8.9 A4.2 4.2 0 0 1 8.9 2.9" stroke="#3a3232" stroke-width="1.1" fill="none"/><path d="M9.9 1.9 A5.5 5.5 0 0 1 1.9 9.9" stroke="#fff" stroke-width="1.2" fill="none"/></svg><div class="a t" style="left:911px;top:153.5px;font-size:14px;letter-spacing:-0.239px;color:#aaa0a0;text-shadow:1px 1px #fff">Долевая</div><svg class="a" style="left:894.7px;top:175.2px;" width="12" height="12" viewBox="0 0 12 12"><circle cx="6" cy="6" r="5.5" fill="#fff"/><path d="M1.9 9.9 A5.5 5.5 0 0 1 9.9 1.9" stroke="#9a9090" stroke-width="1.1" fill="none"/><path d="M2.9 8.9 A4.2 4.2 0 0 1 8.9 2.9" stroke="#3a3232" stroke-width="1.1" fill="none"/><path d="M9.9 1.9 A5.5 5.5 0 0 1 1.9 9.9" stroke="#fff" stroke-width="1.2" fill="none"/></svg><div class="a t" style="left:911px;top:173.7px;font-size:14px;letter-spacing:-0.243px;color:#140e0e;-webkit-text-stroke:0.2px #140e0e">Визирный</div><svg class="a" style="left:894.7px;top:196.6px;" width="12" height="12" viewBox="0 0 12 12"><circle cx="6" cy="6" r="5.5" fill="#fff"/><path d="M1.9 9.9 A5.5 5.5 0 0 1 9.9 1.9" stroke="#9a9090" stroke-width="1.1" fill="none"/><path d="M2.9 8.9 A4.2 4.2 0 0 1 8.9 2.9" stroke="#3a3232" stroke-width="1.1" fill="none"/><path d="M9.9 1.9 A5.5 5.5 0 0 1 1.9 9.9" stroke="#fff" stroke-width="1.2" fill="none"/></svg><div class="a t" style="left:911px;top:195.1px;font-size:14px;letter-spacing:-0.238px;color:#140e0e;-webkit-text-stroke:0.2px #140e0e">Прокол</div><svg class="a" style="left:894.7px;top:216px;" width="12" height="12" viewBox="0 0 12 12"><circle cx="6" cy="6" r="5.5" fill="#fff"/><path d="M1.9 9.9 A5.5 5.5 0 0 1 9.9 1.9" stroke="#9a9090" stroke-width="1.1" fill="none"/><path d="M2.9 8.9 A4.2 4.2 0 0 1 8.9 2.9" stroke="#3a3232" stroke-width="1.1" fill="none"/><path d="M9.9 1.9 A5.5 5.5 0 0 1 1.9 9.9" stroke="#fff" stroke-width="1.2" fill="none"/></svg><div class="a t" style="left:911px;top:214.5px;font-size:14px;letter-spacing:-0.211px;color:#aaa0a0;text-shadow:1px 1px #fff">Текст</div><svg class="a" style="left:894.7px;top:235.5px;" width="12" height="12" viewBox="0 0 12 12"><circle cx="6" cy="6" r="5.5" fill="#fff"/><path d="M1.9 9.9 A5.5 5.5 0 0 1 9.9 1.9" stroke="#9a9090" stroke-width="1.1" fill="none"/><path d="M2.9 8.9 A4.2 4.2 0 0 1 8.9 2.9" stroke="#3a3232" stroke-width="1.1" fill="none"/><path d="M9.9 1.9 A5.5 5.5 0 0 1 1.9 9.9" stroke="#fff" stroke-width="1.2" fill="none"/></svg><div class="a t" style="left:911px;top:234.0px;font-size:14px;letter-spacing:-0.203px;color:#aaa0a0;text-shadow:1px 1px #fff">"Тень"</div><svg class="a" style="left:752px;top:211.5px;" width="100" height="5" viewBox="0 0 100 5"><path d="M1.5 2.5 L97.5 2.5" stroke="#e80808" stroke-width="3" stroke-linecap="round"/></svg><div class="a" style="left:749px;top:255px;width:232px;height:86px;border-style:solid;border-width:1px;border-color:#fff #9a8e8e #9a8e8e #fff"></div><div class="a" style="left:755px;top:264px;width:116px;height:60px;border-style:solid;border-width:1px;border-color:#9a8e8e #fff #fff #9a8e8e;box-shadow:inset 1px 1px #fff, inset -1px -1px #9a8e8e"></div><div class="a" style="left:884px;top:264px;width:92px;height:60px;border-style:solid;border-width:1px;border-color:#9a8e8e #fff #fff #9a8e8e;box-shadow:inset 1px 1px #fff, inset -1px -1px #9a8e8e"></div><svg class="a" style="left:760px;top:267px;" width="12" height="12" viewBox="0 0 12 12"><circle cx="6" cy="6" r="5.5" fill="#fff"/><path d="M1.9 9.9 A5.5 5.5 0 0 1 9.9 1.9" stroke="#9a9090" stroke-width="1.1" fill="none"/><path d="M2.9 8.9 A4.2 4.2 0 0 1 8.9 2.9" stroke="#3a3232" stroke-width="1.1" fill="none"/><path d="M9.9 1.9 A5.5 5.5 0 0 1 1.9 9.9" stroke="#fff" stroke-width="1.2" fill="none"/><circle cx="6" cy="6" r="1.9" fill="#000"/></svg><div class="a t" style="left:778px;top:265.5px;font-size:14px;letter-spacing:-0.242px;color:#140e0e;-webkit-text-stroke:0.2px #140e0e">Линии</div><svg class="a" style="left:760px;top:286px;" width="12" height="12" viewBox="0 0 12 12"><circle cx="6" cy="6" r="5.5" fill="#fff"/><path d="M1.9 9.9 A5.5 5.5 0 0 1 9.9 1.9" stroke="#9a9090" stroke-width="1.1" fill="none"/><path d="M2.9 8.9 A4.2 4.2 0 0 1 8.9 2.9" stroke="#3a3232" stroke-width="1.1" fill="none"/><path d="M9.9 1.9 A5.5 5.5 0 0 1 1.9 9.9" stroke="#fff" stroke-width="1.2" fill="none"/></svg><div class="a t" style="left:778px;top:284.5px;font-size:14px;letter-spacing:-0.236px;color:#140e0e;-webkit-text-stroke:0.2px #140e0e">Кресты</div><svg class="a" style="left:760px;top:305px;" width="12" height="12" viewBox="0 0 12 12"><circle cx="6" cy="6" r="5.5" fill="#fff"/><path d="M1.9 9.9 A5.5 5.5 0 0 1 9.9 1.9" stroke="#9a9090" stroke-width="1.1" fill="none"/><path d="M2.9 8.9 A4.2 4.2 0 0 1 8.9 2.9" stroke="#3a3232" stroke-width="1.1" fill="none"/><path d="M9.9 1.9 A5.5 5.5 0 0 1 1.9 9.9" stroke="#fff" stroke-width="1.2" fill="none"/></svg><div class="a t" style="left:778px;top:303.5px;font-size:14px;letter-spacing:-0.220px;color:#140e0e;-webkit-text-stroke:0.2px #140e0e">Не рисовать</div><svg class="a" style="left:888px;top:277px;" width="12" height="12" viewBox="0 0 12 12"><circle cx="6" cy="6" r="5.5" fill="#fff"/><path d="M1.9 9.9 A5.5 5.5 0 0 1 9.9 1.9" stroke="#9a9090" stroke-width="1.1" fill="none"/><path d="M2.9 8.9 A4.2 4.2 0 0 1 8.9 2.9" stroke="#3a3232" stroke-width="1.1" fill="none"/><path d="M9.9 1.9 A5.5 5.5 0 0 1 1.9 9.9" stroke="#fff" stroke-width="1.2" fill="none"/><circle cx="6" cy="6" r="1.9" fill="#000"/></svg><div class="a t" style="left:905px;top:275.5px;font-size:14px;letter-spacing:-0.227px;color:#140e0e;-webkit-text-stroke:0.2px #140e0e">Рисовать</div><svg class="a" style="left:888px;top:302px;" width="12" height="12" viewBox="0 0 12 12"><circle cx="6" cy="6" r="5.5" fill="#fff"/><path d="M1.9 9.9 A5.5 5.5 0 0 1 9.9 1.9" stroke="#9a9090" stroke-width="1.1" fill="none"/><path d="M2.9 8.9 A4.2 4.2 0 0 1 8.9 2.9" stroke="#3a3232" stroke-width="1.1" fill="none"/><path d="M9.9 1.9 A5.5 5.5 0 0 1 1.9 9.9" stroke="#fff" stroke-width="1.2" fill="none"/></svg><div class="a t" style="left:905px;top:300.5px;font-size:14px;letter-spacing:-0.219px;color:#140e0e;-webkit-text-stroke:0.2px #140e0e">Резать</div><div class="a b" style="left:767px;top:342px;width:97px;height:25px"></div><svg class="a" style="left:767px;top:342px;" width="97" height="25" viewBox="0 0 97 25"><path d="M29 13 l4 5 l8-11" stroke="#20c020" stroke-width="3" fill="none" stroke-linecap="round"/><path d="M29 13.5 l4 4" stroke="#108010" stroke-width="1" fill="none"/></svg><div class="a t" style="left:817px;top:347px;font-size:14.5px;letter-spacing:0.055px;font-weight:bold;color:#000">Да</div><div class="a" style="left:868px;top:342px;width:98px;height:25px;border:1px solid #000"></div><div class="a b" style="left:869px;top:343px;width:96px;height:23px"></div><div class="a" style="left:873px;top:346px;width:88px;height:17px;border:1px dotted #333"></div><svg class="a" style="left:868px;top:342px;" width="97" height="25" viewBox="0 0 97 25"><path d="M14 13 l4 6 l10-13" stroke="#e00010" stroke-width="3.2" fill="none" stroke-linecap="round"/><path d="M14 13.5 l4 5" stroke="#800008" stroke-width="1" fill="none"/></svg><div class="a t" style="left:901.7px;top:347px;font-size:14.5px;letter-spacing:-0.081px;font-weight:bold;color:#000">Отмена</div>
</body></html>
